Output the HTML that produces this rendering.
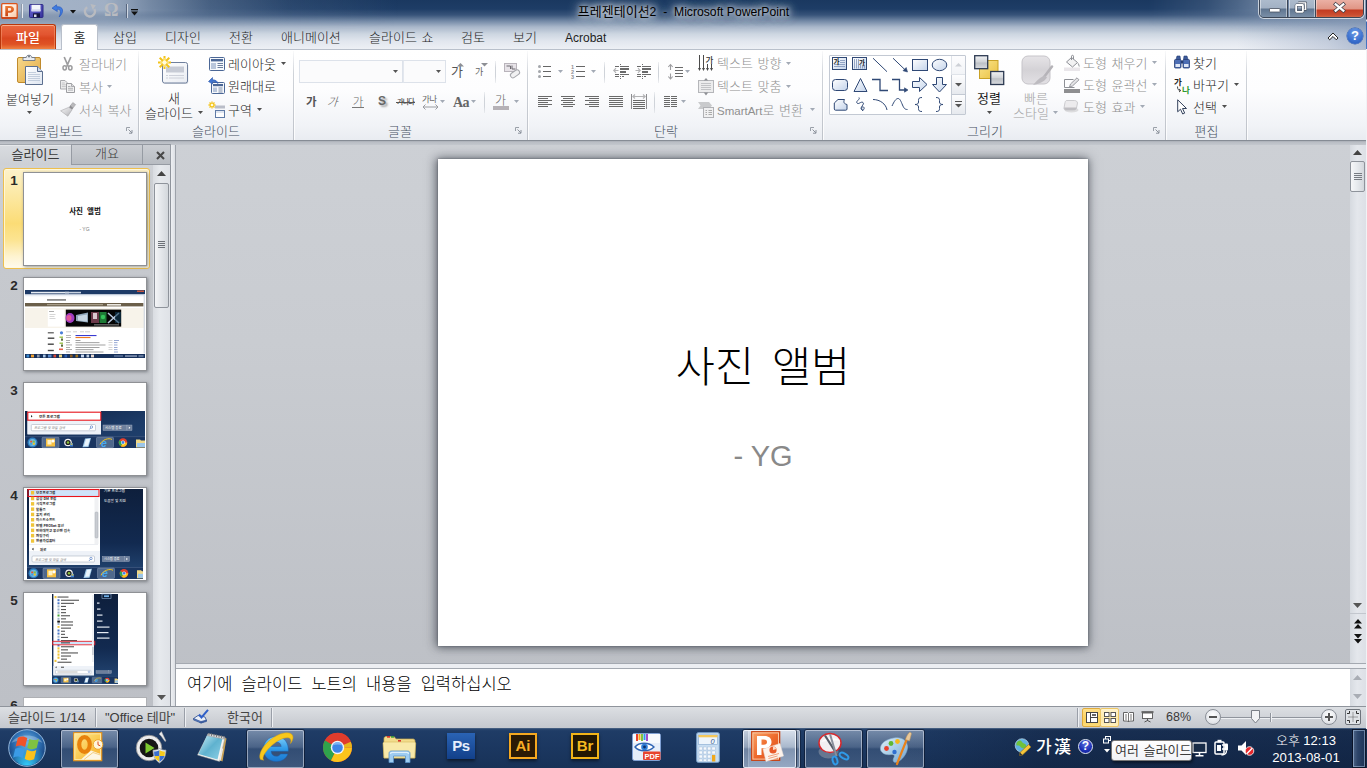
<!DOCTYPE html>
<html lang="ko">
<head>
<meta charset="utf-8">
<title>프레젠테이션2 - Microsoft PowerPoint</title>
<style>
*{box-sizing:border-box;margin:0;padding:0}
html,body{width:1367px;height:768px;overflow:hidden;background:#fff}
body{position:relative;font-family:"Liberation Sans","Noto Sans CJK KR",sans-serif;font-size:12px;color:#1e1e1e}
.abs{position:absolute}
.t{position:absolute;white-space:nowrap;line-height:16px;font-size:12px}
.k{font-size:13px;font-weight:300}
.g{color:#8f8f8f}
.t.k,.t .k{word-spacing:1px}
.dd{position:absolute;width:5px;height:3px;background:#4f4f4f;clip-path:polygon(0 0,100% 0,50% 100%)}
.dd.g{background:#a3aab5}
.ln{position:absolute;width:1px;background:linear-gradient(to bottom,rgba(205,209,216,.3),#cfd3d9 30%,#cfd3d9 70%,rgba(205,209,216,.3))}
.lch{position:absolute;width:7px;height:7px}
svg{position:absolute;overflow:visible}
/* ---------- title bar ---------- */
#titlebar{left:0;top:0;width:1367px;height:50px;
 background:linear-gradient(to left,rgba(125,145,178,.55) 0,rgba(125,145,178,.3) 40px,rgba(125,145,178,0) 130px),linear-gradient(to bottom,#1a3860 0px,#1e3d66 9px,#38547a 15px,#7389a6 21px,#a9b7ca 27px,#cdd6e1 34px,#e1e6ee 41px,#edf0f5 49px);}
#tbl{left:0;top:0;width:420px;height:34px;background:linear-gradient(to right,rgba(172,186,205,.95) 0,rgba(172,186,205,.92) 105px,rgba(172,186,205,.62) 150px,rgba(172,186,205,.3) 210px,rgba(172,186,205,.1) 290px,rgba(172,186,205,0) 400px);-webkit-mask-image:linear-gradient(to bottom,#000 0,#000 10px,rgba(0,0,0,.5) 20px,transparent 32px);mask-image:linear-gradient(to bottom,#000 0,#000 10px,rgba(0,0,0,.5) 20px,transparent 32px)}
#tbr{left:1147px;top:0;width:220px;height:34px;background:linear-gradient(to left,rgba(150,168,192,.75) 0,rgba(150,168,192,.6) 100px,rgba(150,168,192,.2) 160px,rgba(150,168,192,0) 220px);-webkit-mask-image:linear-gradient(to bottom,#000 0,#000 10px,rgba(0,0,0,.5) 20px,transparent 32px);mask-image:linear-gradient(to bottom,#000 0,#000 10px,rgba(0,0,0,.5) 20px,transparent 32px)}
#title{left:0;top:4px;width:1367px;text-align:center;font-size:12.2px;color:#000;
 text-shadow:0 0 5px rgba(255,255,255,.9),0 0 8px rgba(255,255,255,.8),0 0 12px rgba(235,240,248,.8),0 0 16px rgba(220,228,240,.7)}
#title .k{font-weight:400}
/* ---------- ribbon ---------- */
#ribbon{left:0;top:49px;width:1367px;height:92px;background:linear-gradient(to bottom,#ffffff 0,#fdfdfe 40px,#f1f3f7 75px,#e9ecf1 90px);border-top:1px solid #b9c0cb;border-bottom:1px solid #868c95}
.sep{position:absolute;top:51px;width:1px;height:89px;background:linear-gradient(to bottom,rgba(200,204,212,.1),#cfd3d9 25%,#c3c7ce 80%,#bfc3ca 100%);box-shadow:1px 0 0 rgba(255,255,255,.8)}
.grp{position:absolute;top:124px;font-size:13px;line-height:16px;color:#465061;text-align:center;white-space:nowrap}
/* ---------- work area ---------- */
#work{left:0;top:141px;width:1367px;height:565px;background:linear-gradient(to bottom,#cdd0d5 0,#c9ccd1 200px,#bcbfc5 565px)}
#slide{left:438px;top:159px;width:650px;height:487px;background:#fff;box-shadow:0 0 2px rgba(70,75,85,.7),0 0 10px 1px rgba(60,65,75,.55),-4px 0 9px rgba(60,65,75,.22),0 2px 6px rgba(60,65,75,.2)}
.num{font-size:13.500px;line-height:18px;font-weight:700;color:#2a2a2a;width:12px;text-align:center;font-family:"Liberation Sans",sans-serif}
.thumb{position:absolute;left:23px;width:124px;height:94px;background:#fff;border:1px solid rgba(105,108,114,.75);box-shadow:1px 1px 3px rgba(60,64,72,.5)}
/* ---------- status ---------- */
.ssep{position:absolute;top:708px;width:1px;height:19px;background:#9a9fa8;box-shadow:1px 0 0 #eef0f3}
.tb{position:absolute;top:730px;height:38px;border-radius:2px}
.tb.on{background:linear-gradient(to bottom,rgba(190,205,225,.55) 0,rgba(150,170,198,.38) 45%,rgba(95,120,155,.35) 50%,rgba(120,145,180,.4) 100%);box-shadow:inset 0 0 0 1px rgba(225,232,242,.55),0 0 0 1px rgba(10,20,40,.6)}
.tb.act{background:linear-gradient(to bottom,rgba(225,232,242,.85) 0,rgba(185,198,216,.75) 45%,rgba(140,158,185,.75) 50%,rgba(160,178,204,.8) 100%);box-shadow:inset 0 0 0 1px rgba(245,248,252,.8),0 0 0 1px rgba(10,20,40,.6)}

#status{left:0;top:706px;width:1367px;height:23px;background:linear-gradient(to bottom,#dcdfe3 0,#d0d3d8 50%,#c3c7cd 100%);border-top:1px solid #8f949c}
#taskbar{left:0;top:728px;width:1367px;height:40px;background:linear-gradient(to bottom,#5c728f 0,#2a466e 1px,#1f3c66 3px,#1b3760 20px,#183257 40px)}
</style>
</head>
<body>
<div id="titlebar" class="abs"></div>
<div id="tbl" class="abs"></div>
<div id="tbr" class="abs"></div>
<div id="title" class="t"><span class="k">프레젠테이션</span>2&nbsp; -&nbsp; Microsoft PowerPoint</div>
<div id="ribbon" class="abs"></div>
<div id="work" class="abs"></div>
<div id="status" class="abs"></div>
<div id="taskbar" class="abs"></div>
<!-- QAT -->
<svg style="left:1px;top:3px" width="17" height="16" viewBox="0 0 17 16">
 <defs><linearGradient id="pg" x1="0" y1="0" x2="1" y2="1"><stop offset="0" stop-color="#ffffff"/><stop offset=".6" stop-color="#fde3d0"/><stop offset="1" stop-color="#f9c3a0"/></linearGradient>
 <linearGradient id="pg2" x1="0" y1="0" x2="0" y2="1"><stop offset="0" stop-color="#ec7b35"/><stop offset="1" stop-color="#c8410f"/></linearGradient></defs>
 <rect x=".7" y=".7" width="15.500" height="14.600" rx="1" fill="url(#pg)" stroke="#d9541c" stroke-width="1.300"/>
 <path d="M.7 14.800h15.500" stroke="#c23a12" stroke-width="1.400"/>
 <path d="M4.300 3h4.700c2.500 0 4 1.300 4 3.300s-1.600 3.400-4.100 3.400H7V13.300H4.300z M7 5v2.800h1.500c1.100 0 1.700-.5 1.700-1.400S9.600 5 8.500 5z" fill="url(#pg2)"/>
</svg>
<div class="abs" style="left:21px;top:4px;width:1px;height:14px;background:#8d98a8"></div>
<div class="abs" style="left:22px;top:4px;width:1px;height:14px;background:#e6ebf2"></div>
<svg style="left:29px;top:4px" width="15" height="14" viewBox="0 0 15 14">
 <defs><linearGradient id="svg1" x1="0" y1="0" x2="1" y2="1"><stop offset="0" stop-color="#6a66d4"/><stop offset="1" stop-color="#35329a"/></linearGradient></defs>
 <rect x=".5" y=".5" width="13.500" height="13" rx=".8" fill="url(#svg1)" stroke="#2d2b86"/>
 <rect x="2.500" y=".8" width="9" height="6.500" fill="#f4f5fb"/><rect x="2.500" y="5.300" width="9" height="2" fill="#d5d7ee"/>
 <rect x="4" y="9.300" width="7" height="4.200" fill="#15153f"/>
 <rect x="5" y="10.500" width="2.500" height="2.500" fill="#dadbe8"/>
</svg>
<svg style="left:51px;top:4px" width="16" height="14" viewBox="0 0 16 14">
 <path d="M5.500 .8L1 4.200 6.300 7.500 6 5.300c3.300-.4 4.600 1.600 2.200 7.700C13.500 8 12.500 2 5.800 2.800z" fill="#3f7be0" stroke="#2a5cc0" stroke-width=".7" stroke-linejoin="round"/>
</svg>
<svg style="left:70px;top:10px" width="6" height="4" viewBox="0 0 6 4"><path d="M0 0h6l-3 3.5z" fill="#111"/></svg>
<svg style="left:83px;top:4px" width="14" height="14" viewBox="0 0 14 14">
 <path d="M4.200 3.200A5 5 0 1 0 11.300 5" fill="none" stroke="#b9bbc0" stroke-width="2.500"/>
 <path d="M7.500 0l5.300 1.300-3 4.500z" fill="#b9bbc0"/>
</svg>
<div class="t" style="left:104px;top:0px;font-size:18px;line-height:20px;color:#b9bbc0;font-weight:700;font-family:'Liberation Serif','DejaVu Serif',serif">Ω</div>
<div class="abs" style="left:126px;top:4px;width:1px;height:14px;background:#56657d"></div>
<div class="abs" style="left:127px;top:4px;width:1px;height:14px;background:#cfd7e2"></div>
<svg style="left:131px;top:9px" width="8" height="7" viewBox="0 0 8 7"><rect x="0" y="0" width="7" height="1.3" fill="#111"/><path d="M0 2.6h7l-3.5 3.8z" fill="#111"/></svg>

<!-- window buttons -->
<div class="abs" style="left:1259px;top:-2px;width:105px;height:20px;border:1px solid #3c4656;border-radius:0 0 5px 5px;box-shadow:0 0 0 1px rgba(255,255,255,.65);overflow:hidden">
 <div class="abs" style="left:0;top:0;width:28px;height:20px;background:linear-gradient(to bottom,#aebccd 0,#a2b1c4 9px,#5f7590 10px,#7e92aa 19px);border-right:1px solid #3c4656;box-shadow:inset 0 0 0 1px rgba(255,255,255,.45)"></div>
 <div class="abs" style="left:29px;top:0;width:27px;height:20px;background:linear-gradient(to bottom,#aebccd 0,#a2b1c4 9px,#5f7590 10px,#7e92aa 19px);border-right:1px solid #3c4656;box-shadow:inset 0 0 0 1px rgba(255,255,255,.45)"></div>
 <div class="abs" style="left:56px;top:0;width:48px;height:20px;background:linear-gradient(to bottom,#ecb3a8 0,#e09585 10px,#c23b22 11px,#cb4e31 16px,#dd7c58 20px);box-shadow:inset 0 0 0 1px rgba(255,255,255,.4)"></div>
</div>
<svg style="left:1269px;top:8px" width="12" height="5" viewBox="0 0 12 5"><rect x=".5" y=".5" width="10.5" height="3.5" rx=".6" fill="#fff" stroke="#4a5260" stroke-width=".8"/></svg>
<svg style="left:1295px;top:2px" width="12" height="11" viewBox="0 0 13 12">
 <path d="M3.5 .7h8.3v7.6H9.6" fill="none" stroke="#4a5260" stroke-width="2.6" stroke-linejoin="round"/>
 <path d="M3.5 .9h8.1v7.2H9.6" fill="none" stroke="#fff" stroke-width="1.5" stroke-linejoin="round"/>
 <rect x="1.2" y="3.3" width="7.4" height="7.4" rx=".6" fill="none" stroke="#4a5260" stroke-width="3.2"/>
 <rect x="1.2" y="3.3" width="7.4" height="7.4" rx=".6" fill="none" stroke="#fff" stroke-width="2"/>
</svg>
<svg style="left:1334px;top:3px" width="11" height="9" viewBox="0 0 12 10">
 <path d="M1.800 1.500L10.200 8.500M10.200 1.500L1.800 8.500" stroke="#3f3f48" stroke-width="4.200" stroke-linecap="square"/>
 <path d="M1.800 1.500L10.200 8.500M10.200 1.500L1.800 8.500" stroke="#fff" stroke-width="2.600" stroke-linecap="square"/>
</svg>
<!-- help -->
<svg style="left:1327px;top:32px" width="12" height="9" viewBox="0 0 12 9"><path d="M6 1L11 6 9.300 7.800 6 4.500 2.700 7.800 1 6z" fill="#fff" stroke="#222" stroke-width="1" stroke-linejoin="miter"/></svg>
<div class="abs" style="left:1347px;top:28px;width:16px;height:16px;border-radius:8px;background:radial-gradient(circle at 50% 30%,#6f9ee6 0,#3a6fce 60%,#2556b4 100%);box-shadow:0 0 0 .5px #2a58ae"></div>
<div class="t" style="left:1347px;top:28px;width:16px;text-align:center;color:#fff;font-weight:bold;font-size:13px;line-height:16px">?</div>
<div class="abs" style="left:1366px;top:0;width:1px;height:49px;background:linear-gradient(to bottom,#1d2f4d 0,#1d2f4d 19px,#e8ecf2 20px,#e8ecf2 21px,#3a66b0 22px,#4a78c4 48px);z-index:5"></div>
<div class="abs" style="left:1366px;top:49px;width:1px;height:680px;background:#f1f2f5;z-index:5"></div>

<!-- tabs -->
<div class="abs" style="left:0;top:24px;width:56px;height:25px;border-radius:3px 3px 0 0;border:1px solid #b8370c;border-bottom:none;background:linear-gradient(to bottom,#ea6840 0,#e25530 40%,#d9461f 55%,#df5224 80%,#ef8040 100%);box-shadow:inset 0 1px 0 rgba(255,200,170,.7),inset 1px 0 0 rgba(255,180,140,.4),inset -1px 0 0 rgba(255,180,140,.4)"></div>
<div class="t" style="left:0;top:30px;width:56px;text-align:center;color:#fff;font-size:13px;font-weight:500">파일</div>
<div class="abs" style="left:61px;top:24px;width:37px;height:26px;border-radius:3px 3px 0 0;border:1px solid #b9c0cb;border-bottom:none;background:#fff"></div>
<div class="t" style="left:61px;top:30px;width:37px;text-align:center;z-index:3;font-size:13px">홈</div>
<div class="t k tab" style="left:113px;top:30px">삽입</div>
<div class="t k tab" style="left:165px;top:30px">디자인</div>
<div class="t k tab" style="left:229px;top:30px">전환</div>
<div class="t k tab" style="left:281px;top:30px">애니메이션</div>
<div class="t k tab" style="left:369px;top:30px">슬라이드 쇼</div>
<div class="t k tab" style="left:461px;top:30px">검토</div>
<div class="t k tab" style="left:513px;top:30px">보기</div>
<div class="t tab" style="left:565px;top:30px">Acrobat</div>
<!-- ===== RIBBON ===== -->
<svg width="0" height="0" style="left:0;top:0"><defs>
 <linearGradient id="gPaper" x1="0" y1="0" x2="1" y2="1"><stop offset="0" stop-color="#ffffff"/><stop offset="1" stop-color="#dfe6f1"/></linearGradient>
 <linearGradient id="gClip" x1="0" y1="0" x2="1" y2="1"><stop offset="0" stop-color="#f7d98c"/><stop offset="1" stop-color="#e2a943"/></linearGradient>
 <linearGradient id="gShape" x1="0" y1="0" x2="1" y2="1"><stop offset="0" stop-color="#ffffff"/><stop offset="1" stop-color="#c3d3ea"/></linearGradient>
 <linearGradient id="gGray" x1="0" y1="0" x2="1" y2="1"><stop offset="0" stop-color="#f1f1f2"/><stop offset="1" stop-color="#a9abaf"/></linearGradient>
 <linearGradient id="gYel" x1="0" y1="0" x2="1" y2="1"><stop offset="0" stop-color="#fbe58e"/><stop offset="1" stop-color="#e9c040"/></linearGradient>
 <symbol id="lch" viewBox="0 0 7 7"><path d="M.5 4V.5H4" fill="none" stroke="#9aa0a9" stroke-width="1"/><path d="M2.5 2.5L6 6M6 3v3.2H3" fill="none" stroke="#8b919b" stroke-width="1"/></symbol>
</defs></svg>

<!-- clipboard group -->
<svg style="left:16px;top:54px" width="29" height="32" viewBox="0 0 29 32">
 <rect x="1.5" y="3.5" width="23" height="25" rx="1.5" fill="url(#gClip)" stroke="#c08a2c"/>
 <path d="M7 3.5h3.2c0-3 5.6-3 5.6 0H19v3H7z" fill="#e9ecf1" stroke="#6d7684" stroke-width=".9"/>
 <circle cx="13" cy="2.6" r="1" fill="#6d7684"/>
 <path d="M9.5 12.5h12l5 5v13h-17z" fill="url(#gPaper)" stroke="#5c6f8f" stroke-width="1"/>
 <path d="M21.5 12.5v5h5" fill="#cfd9e8" stroke="#5c6f8f" stroke-width="1"/>
 <path d="M12 18.5h8M12 20.5h12M12 22.5h12M12 24.5h12M12 26.5h12" stroke="#b8c4d6" stroke-width=".8"/>
</svg>
<div class="t k" style="left:6px;top:92px">붙여넣기</div>
<div class="dd" style="left:27px;top:111px"></div>

<svg style="left:62px;top:57px" width="11" height="14" viewBox="0 0 11 14">
 <path d="M2.200 0L6.300 9.500M8.800 0L4.700 9.500" stroke="#9c9c9e" stroke-width="1.700" fill="none"/>
 <ellipse cx="2.700" cy="10.800" rx="1.700" ry="2.100" fill="none" stroke="#9c9c9e" stroke-width="1.500"/>
 <ellipse cx="8.300" cy="10.800" rx="1.700" ry="2.100" fill="none" stroke="#9c9c9e" stroke-width="1.500"/>
</svg>
<div class="t k g" style="left:79px;top:57px">잘라내기</div>
<svg style="left:60px;top:80px" width="16" height="13" viewBox="0 0 16 13">
 <path d="M.5 .5h4.500l2 2v6.500H.5z" fill="#ededee" stroke="#a9aaae"/>
 <path d="M1.800 3h3M1.800 4.800h4M1.800 6.600h4" stroke="#b9babd" stroke-width=".8"/>
 <path d="M6.500 3.500h5l3 3v6H6.500z" fill="#f1f1f2" stroke="#9c9da1"/>
 <path d="M11.500 3.500v3h3" fill="#dcdcde" stroke="#9c9da1" stroke-width=".8"/>
 <path d="M8 6.500h2.500M8 8.300h5M8 10.100h5" stroke="#a9aaae" stroke-width=".9"/>
</svg>
<div class="t k g" style="left:79px;top:80px">복사</div>
<div class="dd g" style="left:107px;top:85px"></div>
<svg style="left:60px;top:102px" width="17" height="15" viewBox="0 0 17 15">
 <defs><linearGradient id="fpg" x1="0" y1="0" x2="1" y2="1"><stop offset="0" stop-color="#f4f4f5"/><stop offset=".6" stop-color="#cfcfd2"/><stop offset="1" stop-color="#a5a5a9"/></linearGradient></defs>
 <path d="M12.800 .6l2.800 2-2.700 3.500-2.800-2z" fill="#b9b9bc" stroke="#9a9a9e" stroke-width=".6"/>
 <path d="M10.300 3.600l3 2.300-1.300 1.800-3.100-2.200z" fill="#8e8e92"/>
 <path d="M8.800 5.300l3.300 2.400-4.300 6.500L.6 8.800z" fill="url(#fpg)" stroke="#a9a9ad" stroke-width=".6"/>
</svg>
<div class="t k g" style="left:79px;top:103px">서식 복사</div>
<div class="grp k" style="left:0;width:118px">클립보드</div>
<svg style="left:126px;top:127px" width="7" height="7"><use href="#lch"/></svg>
<div class="sep" style="left:138px"></div>

<!-- slides group -->
<svg style="left:158px;top:56px" width="32" height="30" viewBox="0 0 32 30">
 <defs><linearGradient id="nsg" x1="0" y1="0" x2="1" y2="1"><stop offset="0" stop-color="#ffffff"/><stop offset="1" stop-color="#e9ecf2"/></linearGradient></defs>
 <rect x="4.500" y="6.500" width="25" height="20.500" rx="2" fill="#9aa3b3" opacity=".35" transform="translate(.8 1)"/>
 <rect x="4.500" y="6.500" width="25" height="20.500" rx="2" fill="url(#nsg)" stroke="#6f7f9c"/>
 <rect x="8" y="10.500" width="18" height="6" fill="#c7cbd5"/>
 <path d="M8 19.500h2M11 19.500h15M8 22h2M11 22h15" stroke="#c9cdd6" stroke-width=".9"/>
 <path d="M6.500 0v13M0 6.500h13M1.700 1.700l9.600 9.600M11.300 1.700l-9.600 9.600" stroke="#f3c318" stroke-width="2"/>
 <path d="M6.500 2v9M2 6.500h9" stroke="#fbe26a" stroke-width="1.200"/>
 <circle cx="6.500" cy="6.500" r="2.200" fill="#fffbe0"/>
</svg>
<div class="t k" style="left:145px;top:91px;width:58px;text-align:center">새</div>
<div class="t k" style="left:145px;top:106px">슬라이드</div>
<div class="dd" style="left:198px;top:111px"></div>

<svg style="left:209px;top:57px" width="16" height="14" viewBox="0 0 16 14">
 <rect x=".5" y=".5" width="15" height="13" rx="1" fill="#f7f9fc" stroke="#4b6796"/>
 <rect x="2" y="2" width="12" height="2.4" fill="#4b6796"/>
 <rect x="2" y="6" width="5" height="6" fill="#b9c6db"/>
 <path d="M8.5 6.5h5.5M8.5 8.5h5.5M8.5 10.5h5.5" stroke="#6d7f9e" stroke-width="1"/>
</svg>
<div class="t k" style="left:228px;top:57px">레이아웃</div>
<div class="dd" style="left:281px;top:62px"></div>
<svg style="left:208px;top:77px" width="17" height="17" viewBox="0 0 17 17">
 <rect x="3.5" y="5.5" width="13" height="11" rx="1" fill="#f7f9fc" stroke="#4b6796"/>
 <rect x="5" y="7" width="10" height="2.2" fill="#4b6796"/>
 <rect x="5" y="10.5" width="4" height="4.5" fill="#b9c6db"/>
 <path d="M10.5 11h4M10.5 13h4M10.5 15h4" stroke="#6d7f9e" stroke-width=".9"/>
 <path d="M.5 4.5L4.5 .5v2.3c3.2 0 5 1.400 5.500 3.700-1.500-1.300-3-1.800-5.500-1.800v2.300z" fill="#3f74d1" stroke="#2a56a8" stroke-width=".6"/>
</svg>
<div class="t k" style="left:228px;top:79px">원래대로</div>
<svg style="left:208px;top:101px" width="18" height="17" viewBox="0 0 18 17">
 <rect x="7" y="4.500" width="10" height="3" fill="#b9bdc8"/>
 <rect x="7.500" y="9.500" width="9" height="7" fill="#fdfdfe" stroke="#5f7aa6"/>
 <rect x="8" y="10" width="8" height="2" fill="#dfe5f0"/>
 <path d="M4 .5v7M.5 4h7M1.500 1.500l5 5M6.500 1.500l-5 5" stroke="#f3c318" stroke-width="1.300"/>
 <circle cx="4" cy="4" r="1.300" fill="#fffbe0"/>
</svg>
<div class="t k" style="left:228px;top:103px">구역</div>
<div class="dd" style="left:257px;top:108px"></div>
<div class="grp k" style="left:138px;width:156px">슬라이드</div>
<div class="sep" style="left:293px"></div>

<!-- font group -->
<div class="abs" style="left:299px;top:60px;width:104px;height:23px;border:1px solid #dde2ea;background:#fbfbfc"></div>
<div class="abs" style="left:403px;top:60px;width:43px;height:23px;border:1px solid #dde2ea;border-left:1px solid #e3e7ee;background:#fbfbfc"></div>
<div class="dd" style="left:393px;top:70px;background:#555"></div>
<div class="dd" style="left:436px;top:70px;background:#555"></div>
<div class="t" style="left:451px;top:63px;font-size:13px;line-height:18px;color:#555;font-weight:400">가</div>
<svg style="left:457px;top:63px" width="7" height="4" viewBox="0 0 7 4"><path d="M0 3.500L3.500 0 7 3.500z" fill="#8d8f94"/></svg>
<div class="t" style="left:475px;top:65px;font-size:9px;line-height:14px;color:#666;font-weight:400">가</div>
<svg style="left:481px;top:63px" width="7" height="4" viewBox="0 0 7 4"><path d="M0 0h7L3.500 3.500z" fill="#8d8f94"/></svg>
<div class="ln" style="left:495px;top:61px;height:22px"></div>
<svg style="left:504px;top:63px" width="17" height="16" viewBox="0 0 17 16">
 <rect x=".5" y=".5" width="12" height="8" fill="#e7e3e8" stroke="#b9b4bb"/>
 <path d="M2.500 3h4v3M8 2.500v3.500h3.500" fill="none" stroke="#6d6a70" stroke-width="1"/>
 <rect x="6" y="8.300" width="10" height="5" rx="2.400" transform="rotate(-35 11 10.800)" fill="#f1f1f2" stroke="#a5a6ab"/>
</svg>
<div class="t" style="left:306px;top:95px;font-size:11.500px;line-height:14px;color:#555;font-weight:700">가</div>
<div class="t" style="left:328px;top:95px;font-size:11.500px;line-height:14px;color:#5a5a5a;font-weight:300;transform:skewX(-18deg)">가</div>
<div class="t" style="left:352px;top:95px;font-size:11.500px;line-height:14px;color:#6a6a6a;font-weight:300;border-bottom:1px solid #777;height:13px;width:12px;text-align:center">가</div>
<div class="t" style="left:378px;top:92px;font-size:12px;line-height:18px;color:#666;font-weight:700;text-shadow:2px 2px 2px rgba(0,0,0,.35)">S</div>
<div class="t" style="left:397px;top:95px;font-size:7px;line-height:14px;color:#444;letter-spacing:-.8px;font-weight:500">가나다</div>
<div class="abs" style="left:396px;top:102px;width:19px;height:1px;background:#555"></div>
<div class="t" style="left:422px;top:92px;font-size:8.500px;line-height:14px;color:#666;letter-spacing:-.5px;font-weight:400">가나</div>
<svg style="left:422px;top:104px" width="17" height="6" viewBox="0 0 17 6"><path d="M1 3h15M3.500 .5L1 3l2.500 2.500M13.500 .5L16 3l-2.500 2.500" fill="none" stroke="#9a9ca1" stroke-width="1"/></svg>
<div class="dd g" style="left:440px;top:100px"></div>
<div class="t" style="left:453px;top:94px;font-size:14px;line-height:18px;color:#666;font-weight:700;font-family:'Liberation Serif',serif;letter-spacing:-.5px">Aa</div>
<div class="dd g" style="left:471px;top:100px"></div>
<div class="ln" style="left:484px;top:92px;height:21px"></div>
<div class="t" style="left:495px;top:92px;font-size:12px;line-height:18px;color:#666;font-weight:300">가</div>
<div class="abs" style="left:493px;top:106px;width:16px;height:4px;background:#b5b1b6"></div>
<div class="dd g" style="left:514px;top:100px"></div>
<div class="grp k" style="left:294px;width:212px">글꼴</div>
<svg style="left:515px;top:127px" width="7" height="7"><use href="#lch"/></svg>
<div class="sep" style="left:527px"></div>

<!-- paragraph group -->
<svg style="left:538px;top:65px" width="14" height="13" viewBox="0 0 14 13"><g fill="#a3a6ab"><circle cx="1.500" cy="1.500" r="1.500"/><circle cx="1.500" cy="6.500" r="1.500"/><circle cx="1.500" cy="11.500" r="1.500"/></g><g fill="#666" shape-rendering="crispEdges"><rect x="5" y="1" width="8" height="1"/><rect x="5" y="6" width="8" height="1"/><rect x="5" y="11" width="8" height="1"/></g></svg>
<div class="dd g" style="left:558px;top:70px"></div>
<svg style="left:571px;top:64px" width="15" height="15" viewBox="0 0 15 15"><g fill="#666" shape-rendering="crispEdges"><rect x="5" y="2" width="9" height="1"/><rect x="5" y="7" width="9" height="1"/><rect x="5" y="12" width="9" height="1"/></g><g font-size="5.500" font-family="Liberation Sans,sans-serif" font-weight="bold" fill="#8e9095"><text x="0" y="4.500">1</text><text x="0" y="9.500">2</text><text x="0" y="14.500">3</text></g></svg>
<div class="dd g" style="left:591px;top:70px"></div>
<div class="ln" style="left:604px;top:62px;height:21px"></div>
<svg style="left:613px;top:64px" width="17" height="15" viewBox="0 0 17 15"><g fill="#6a6a6a" shape-rendering="crispEdges"><rect x="7" y="0" width="1" height="1"/><rect x="7" y="14" width="1" height="1"/><rect x="7" y="12" width="1" height="1"/><rect x="2" y="2" width="4" height="1"/><rect x="7" y="2" width="9" height="1"/><rect x="7" y="4" width="9" height="2"/><rect x="7" y="7" width="6" height="2"/><rect x="2" y="10" width="4" height="1"/><rect x="7" y="10" width="9" height="1"/><rect x="2" y="12" width="4" height="1"/><rect x="9" y="12" width="2" height="1"/></g><path d="M5.500 6.500H.8M3 4.200L.8 6.500 3 8.800" fill="none" stroke="#b3b3b5" stroke-width="1.200"/></svg>
<svg style="left:635px;top:64px" width="17" height="15" viewBox="0 0 17 15"><g fill="#6a6a6a" shape-rendering="crispEdges"><rect x="7" y="0" width="1" height="1"/><rect x="7" y="14" width="1" height="1"/><rect x="7" y="12" width="1" height="1"/><rect x="2" y="2" width="4" height="1"/><rect x="7" y="2" width="9" height="1"/><rect x="7" y="4" width="9" height="2"/><rect x="7" y="7" width="6" height="2"/><rect x="2" y="10" width="4" height="1"/><rect x="7" y="10" width="9" height="1"/><rect x="2" y="12" width="4" height="1"/><rect x="9" y="12" width="2" height="1"/></g><path d="M.5 6.500h4.700M3 4.200l2.200 2.300L3 8.800" fill="none" stroke="#b3b3b5" stroke-width="1.200"/></svg>
<div class="ln" style="left:658px;top:62px;height:21px"></div>
<svg style="left:667px;top:63px" width="17" height="17" viewBox="0 0 17 17"><g fill="#6a6a6a" shape-rendering="crispEdges"><rect x="8" y="4" width="8" height="1"/><rect x="8" y="7" width="8" height="1"/><rect x="8" y="10" width="8" height="1"/><rect x="8" y="13" width="8" height="1"/></g><path d="M3.500 1.500v5.500M1.300 4L3.500 1.500 5.700 4M3.500 10.500v5.500M1.300 13.500L3.500 16l2.200-2.500" fill="none" stroke="#9d9da0" stroke-width="1.100"/></svg>
<div class="dd g" style="left:685px;top:70px"></div>
<svg style="left:538px;top:96px" width="14" height="11" viewBox="0 0 14 11"><g fill="#6a6a6a" shape-rendering="crispEdges"><rect x="0" y="0" width="14" height="1"/><rect x="0" y="2" width="10" height="1"/><rect x="0" y="4" width="14" height="1"/><rect x="0" y="6" width="10" height="1"/><rect x="0" y="8" width="14" height="1"/><rect x="0" y="10" width="10" height="1"/></g></svg>
<svg style="left:561px;top:96px" width="14" height="11" viewBox="0 0 14 11"><g fill="#6a6a6a" shape-rendering="crispEdges"><rect x="0" y="0" width="14" height="1"/><rect x="2" y="2" width="10" height="1"/><rect x="0" y="4" width="14" height="1"/><rect x="2" y="6" width="10" height="1"/><rect x="0" y="8" width="14" height="1"/><rect x="2" y="10" width="10" height="1"/></g></svg>
<svg style="left:585px;top:96px" width="14" height="11" viewBox="0 0 14 11"><g fill="#6a6a6a" shape-rendering="crispEdges"><rect x="0" y="0" width="14" height="1"/><rect x="4" y="2" width="10" height="1"/><rect x="0" y="4" width="14" height="1"/><rect x="4" y="6" width="10" height="1"/><rect x="0" y="8" width="14" height="1"/><rect x="4" y="10" width="10" height="1"/></g></svg>
<svg style="left:609px;top:96px" width="14" height="11" viewBox="0 0 14 11"><g fill="#6a6a6a" shape-rendering="crispEdges"><rect x="0" y="0" width="14" height="1"/><rect x="0" y="2" width="14" height="1"/><rect x="0" y="4" width="14" height="1"/><rect x="0" y="6" width="14" height="1"/><rect x="0" y="8" width="14" height="1"/><rect x="0" y="10" width="14" height="1"/></g></svg>
<svg style="left:631px;top:94px" width="16" height="15" viewBox="0 0 16 15"><g fill="#8d8d90" shape-rendering="crispEdges"><rect x="0" y="0" width="1" height="15"/><rect x="15" y="0" width="1" height="15"/></g><g fill="#6a6a6a" shape-rendering="crispEdges"><rect x="2" y="6" width="12" height="1"/><rect x="2" y="8" width="12" height="1"/><rect x="2" y="10" width="12" height="1"/><rect x="2" y="12" width="12" height="1"/><rect x="2" y="14" width="12" height="1"/></g><path d="M1.500 2.500h13M4 .5L1.800 2.500 4 4.500M12 .5l2.200 2L12 4.500" fill="none" stroke="#b3b3b5" stroke-width="1.100"/></svg>
<div class="ln" style="left:654px;top:92px;height:21px"></div>
<svg style="left:664px;top:96px" width="13" height="11" viewBox="0 0 13 11"><g fill="#6a6a6a" shape-rendering="crispEdges"><rect x="0" y="0" width="6" height="1"/><rect x="0" y="2" width="6" height="1"/><rect x="0" y="4" width="6" height="1"/><rect x="0" y="6" width="6" height="1"/><rect x="0" y="8" width="6" height="1"/><rect x="0" y="10" width="6" height="1"/><rect x="7" y="0" width="6" height="1"/><rect x="7" y="2" width="6" height="1"/><rect x="7" y="4" width="6" height="1"/><rect x="7" y="6" width="6" height="1"/><rect x="7" y="8" width="6" height="1"/><rect x="7" y="10" width="6" height="1"/></g></svg>
<div class="dd g" style="left:681px;top:100px"></div>

<svg style="left:698px;top:55px" width="16" height="17" viewBox="0 0 16 17">
 <g fill="#4a4a4a" shape-rendering="crispEdges"><rect x="1" y="0" width="1" height="14"/><rect x="5" y="0" width="1" height="14"/><rect x="9" y="9" width="1" height="5"/><rect x="13" y="9" width="1" height="5"/></g>
 <path d="M0 13h3l-1.500 3zM4 13h3l-1.500 3zM8 13h3l-1.500 3zM12 13h3l-1.500 3z" fill="#4a4a4a"/>
 <text x="7.500" y="7.500" font-size="8.500" font-weight="500" font-family="Noto Sans CJK KR,sans-serif" fill="#333">가</text>
</svg>
<div class="t k g" style="left:717px;top:56px">텍스트 방향</div>
<div class="dd g" style="left:786px;top:62px"></div>
<svg style="left:698px;top:78px" width="17" height="18" viewBox="0 0 17 18">
 <rect x=".5" y="2.500" width="15" height="12" fill="#ececed" stroke="#b5b6ba"/>
 <path d="M3 5.500h10M3 7.500h10M3 9.500h10M3 11.500h10" stroke="#bdbec2" stroke-width=".9"/>
 <path d="M8 0l2.200 2.500H5.800zM8 17.500l2.200-3H5.800z" fill="#8e9095"/>
</svg>
<div class="t k g" style="left:717px;top:79px">텍스트 맞춤</div>
<div class="dd g" style="left:786px;top:85px"></div>
<svg style="left:698px;top:101px" width="17" height="17" viewBox="0 0 17 17">
 <path d="M0 1h11l3 3.500-3 3.500H0l2.500-3.500z" fill="#c9cacc"/>
 <rect x="5.500" y="6.500" width="10" height="10" fill="#f0f0f1" stroke="#b0b1b5"/>
 <path d="M7.500 9.500h1.500M10.500 9.500h3.500M7.500 11.500h1.500M10.500 11.500h3.500M7.500 13.500h1.500M10.500 13.500h3.500" stroke="#aaa" stroke-width="1"/>
</svg>
<div class="t g" style="left:717px;top:103px"><span style="font-size:11.500px">SmartArt</span><span class="k">로 변환</span></div>
<div class="dd g" style="left:810px;top:108px"></div>
<div class="grp k" style="left:528px;width:276px">단락</div>
<svg style="left:810px;top:127px" width="7" height="7"><use href="#lch"/></svg>
<div class="sep" style="left:822px"></div>

<!-- drawing group -->
<div class="abs" style="left:829px;top:55px;width:137px;height:60px;border:1px solid #c3c9d3;background:#fff;border-radius:1px"></div>
<div class="abs" style="left:951px;top:56px;width:14px;height:19px;background:linear-gradient(#fdfdfe,#f2f4f7);border-left:1px solid #dfe3e9;border-bottom:1px solid #dfe3e9"></div>
<div class="abs" style="left:951px;top:75px;width:14px;height:20px;background:linear-gradient(#fdfdfe,#e6e9ee);border-left:1px solid #c3c9d3;border-bottom:1px solid #c3c9d3"></div>
<div class="abs" style="left:951px;top:95px;width:14px;height:19px;background:linear-gradient(#fdfdfe,#e6e9ee);border-left:1px solid #c3c9d3"></div>
<svg style="left:955px;top:63px" width="7" height="4" viewBox="0 0 7 4"><path d="M0 3.500L3.500 0 7 3.500z" fill="#cdd0d6"/></svg>
<svg style="left:955px;top:83px" width="7" height="4" viewBox="0 0 7 4"><path d="M0 0h7L3.500 3.500z" fill="#555"/></svg>
<svg style="left:955px;top:101px" width="7" height="7" viewBox="0 0 7 7"><path d="M0 .5h7" stroke="#555" stroke-width="1"/><path d="M0 3h7L3.500 6.500z" fill="#555"/></svg>
<svg style="left:829px;top:55px" width="122" height="60" viewBox="829 55 122 60" fill="none" stroke="#2f4875" stroke-width="1">
 <!-- row1 -->
 <rect x="832.500" y="57.500" width="14" height="12" fill="url(#gShape)"/>
 <path d="M840 60.500h5M840 62.500h5M834 64.500h11M834 66.500h11" stroke="#7f93b8" stroke-width=".8"/>
 <text x="833.500" y="63.500" font-size="6.500" font-weight="bold" font-family="Noto Sans CJK KR,sans-serif" fill="#1a1a1a" stroke="none">가</text>
 <rect x="852.500" y="57.500" width="14" height="12" fill="url(#gShape)"/>
 <path d="M854.500 59v9.500M856.500 59v9.500M858.500 59v9.500M860.500 65v3.500M862.500 65v3.500M864.500 65v3.500" stroke="#7f93b8" stroke-width=".8"/>
 <text x="859" y="64.500" font-size="6.500" font-weight="bold" font-family="Noto Sans CJK KR,sans-serif" fill="#1a1a1a" stroke="none">가</text>
 <path d="M873 58.200L887 71.700"/>
 <path d="M893 58.200L906 70.700"/><path d="M907.500 72l-4.500-1.300 3.200-3.200z" fill="#2f4875" stroke-width=".6"/>
 <rect x="912.500" y="59.500" width="15" height="11" fill="url(#gShape)"/>
 <ellipse cx="939.500" cy="65" rx="7.300" ry="5.700" fill="url(#gShape)"/>
 <!-- row2 -->
 <rect x="832.500" y="79.500" width="15" height="11" rx="3" fill="url(#gShape)"/>
 <path d="M860.500 78.500L867 91.500H854z" fill="url(#gShape)"/>
 <path d="M872 79.500h8v11h8" stroke-width="1.300"/>
 <path d="M892 79.500h7.500v10.500h6" stroke-width="1.300"/><path d="M908 90l-3.500-2.200v4.400z" fill="#2f4875" stroke-width=".6"/>
 <path d="M912.500 81.500h7v-4l7.500 7-7.500 7v-4h-7z" fill="url(#gShape)"/>
 <path d="M936.500 77.500h6v7h4l-7 7.500-7-7.500h4z" fill="url(#gShape)"/>
 <!-- row3 -->
 <path d="M838 99.500h6.500c-1.500 3 0 4.500 2.500 5v4.500c0 .8-.5 1.200-1.200 1.200H835.500c-.7 0-1.200-.5-1.200-1.200V103z" fill="url(#gShape)"/>
 <path d="M859 97.500c1.500 2-3.500 3.500-2 5.500s4-2 6-.500-3.500 5-1.500 7 3.500-1.500 2-2.500-3 1.500-.5 4"/>
 <path d="M873 99.500c7 0 13 4.500 14 10.500"/>
 <path d="M892 106c2-4.500 4-7.500 6-7.500s3 3 4.500 6.500 2.500 4.500 5 4.500"/>
 <path d="M922 97.500c-3 0-3.500 1-3.500 3v1.500c0 1.500-1 2.500-3.500 2.500 2.500 0 3.500 1 3.500 2.500v1.500c0 2 .5 3 3.500 3"/>
 <path d="M936 97.500c3 0 3.500 1 3.500 3v1.500c0 1.500 1 2.500 3.500 2.500-2.500 0-3.500 1-3.500 2.500v1.500c0 2-.5 3-3.500 3"/>
</svg>

<svg style="left:974px;top:55px" width="31" height="31" viewBox="0 0 31 31">
 <defs><linearGradient id="gSq" x1="0" y1="0" x2="0" y2="1"><stop offset="0" stop-color="#f2f3f5"/><stop offset=".5" stop-color="#cfd2d6"/><stop offset=".55" stop-color="#bcc0c5"/><stop offset="1" stop-color="#d9dbdf"/></linearGradient></defs>
 <rect x="5.500" y="5.500" width="18.500" height="18" fill="url(#gYel)" stroke="#c9a227"/>
 <rect x=".7" y=".7" width="13" height="13" fill="url(#gSq)" stroke="#2d3a52" stroke-width="1.300"/>
 <rect x="16.700" y="16.500" width="13" height="13" fill="url(#gSq)" stroke="#2d3a52" stroke-width="1.300"/>
</svg>
<div class="t k" style="left:959px;top:91px;width:60px;text-align:center;font-weight:400">정렬</div>
<div class="dd" style="left:987px;top:111px"></div>
<svg style="left:1021px;top:55px" width="33" height="32" viewBox="0 0 33 32">
 <defs><linearGradient id="gQs" x1="0" y1="0" x2="0" y2="1"><stop offset="0" stop-color="#e6e4e7"/><stop offset=".5" stop-color="#d4d2d6"/><stop offset="1" stop-color="#e2e0e4"/></linearGradient></defs>
 <rect x="1" y="1" width="28" height="28" rx="6" fill="url(#gQs)" stroke="#c6c4c9" stroke-width="1"/>
 <path d="M31 11.500L23 22" stroke="#b5b3b8" stroke-width="2.600" stroke-linecap="round"/>
 <path d="M24 20.500c-4 1-7 4-12 9.500 6-1 11-3 14-7.500z" fill="#bdbbc0"/>
</svg>
<div class="t k" style="left:1006px;top:91px;width:60px;text-align:center;color:#a3a3a3">빠른</div>
<div class="t k" style="left:1013px;top:106px;color:#a3a3a3">스타일</div>
<div class="dd g" style="left:1053px;top:111px"></div>

<svg style="left:1064px;top:55px" width="17" height="16" viewBox="0 0 17 16">
 <rect x="0" y="12.500" width="16" height="3.500" fill="#e9e6ea"/>
 <path d="M7.500 2.500l6 5-5 4.500-6-5z" fill="#f2f2f3" stroke="#8e9096" stroke-width="1"/>
 <path d="M7.500 5V1.200c0-1.200 2-1.200 2 0v3" fill="none" stroke="#8e9096" stroke-width="1"/>
 <path d="M13.500 7.500c1.500 1 2.500 2.500 2 4.500-1-.5-1.500-2-2-4.500z" fill="#a7a9ae"/>
</svg>
<div class="t k g" style="left:1083px;top:56px">도형 채우기</div>
<div class="dd g" style="left:1152px;top:61px"></div>
<svg style="left:1064px;top:77px" width="17" height="16" viewBox="0 0 17 16">
 <rect x="0" y="12" width="16" height="4" fill="#8e8e90"/>
 <path d="M.5 10.500V2.500h9" fill="none" stroke="#8e9096" stroke-width="1"/><path d="M.5 10.500h10" stroke="#8e9096" stroke-width="1"/>
 <path d="M5.500 10l1-3L13 .8l2 2L8.500 9z" fill="#e4e4e6" stroke="#8e9096" stroke-width=".9"/>
</svg>
<div class="t k g" style="left:1083px;top:78px">도형 윤곽선</div>
<div class="dd g" style="left:1152px;top:83px"></div>
<svg style="left:1063px;top:99px" width="17" height="14" viewBox="0 0 17 14">
 <ellipse cx="8.500" cy="11" rx="7" ry="2.500" fill="#dcdcde"/>
 <path d="M3.500 1.500h8c1.500 0 3 1 3 2.500l-1 5c0 1-1.500 2-3 2H3c-1.500 0-2.200-1-2-2l1-5.500c.2-1 .8-2 1.500-2z" fill="#ecebed" stroke="#c2c1c5" stroke-width=".8"/>
 <path d="M1.200 8.500h12.500l-.3 1c0 1-1.500 1.500-3 1.500H3c-1.500 0-2-1-1.800-2.500z" fill="#bfbec2"/>
</svg>
<div class="t k g" style="left:1083px;top:100px">도형 효과</div>
<div class="dd g" style="left:1140px;top:105px"></div>
<div class="grp k" style="left:823px;width:324px">그리기</div>
<svg style="left:1153px;top:127px" width="7" height="7"><use href="#lch"/></svg>
<div class="sep" style="left:1165px"></div>

<!-- editing group -->
<svg style="left:1174px;top:55px" width="16" height="14" viewBox="0 0 16 14">
 <path d="M2 4.500L3 1h3l.5 3.500zM9.500 4.500L10 1h3l1 3.500z" fill="#3c5a9a" stroke="#243c73" stroke-width=".6"/>
 <rect x=".5" y="4.500" width="6.500" height="8.500" rx="1" fill="#4c6db3" stroke="#243c73" stroke-width=".8"/>
 <rect x="9" y="4.500" width="6.500" height="8.500" rx="1" fill="#4c6db3" stroke="#243c73" stroke-width=".8"/>
 <rect x="7" y="5.500" width="2" height="3" fill="#243c73"/>
 <rect x="1.500" y="9" width="4.500" height="3" fill="#dfe7f6"/><rect x="10" y="9" width="4.500" height="3" fill="#dfe7f6"/>
</svg>
<div class="t k" style="left:1193px;top:56px">찾기</div>
<svg style="left:1174px;top:77px" width="17" height="17" viewBox="0 0 17 17">
 <text x="0" y="7.500" font-size="8.500" font-weight="bold" font-family="Noto Sans CJK KR,sans-serif" fill="#222">가</text>
 <text x="8" y="16" font-size="8.500" font-weight="bold" font-family="Noto Sans CJK KR,sans-serif" fill="#2e9a2e">나</text>
 <path d="M3.500 9.500c0 3 1 4 3 4M5 12l1.800 1.500L5 15" fill="none" stroke="#444" stroke-width="1"/>
</svg>
<div class="t k" style="left:1193px;top:78px">바꾸기</div>
<div class="dd" style="left:1234px;top:83px"></div>
<svg style="left:1177px;top:99px" width="11" height="16" viewBox="0 0 11 16">
 <path d="M.7 .8v12l2.800-2.600 2.200 4.800 2-.9-2.200-4.600h4z" fill="#fff" stroke="#33415c" stroke-width="1" stroke-linejoin="round"/>
</svg>
<div class="t k" style="left:1193px;top:100px">선택</div>
<div class="dd" style="left:1222px;top:105px"></div>
<div class="grp k" style="left:1166px;width:81px">편집</div>
<div class="sep" style="left:1246px"></div>
<!-- ===== LEFT PANEL ===== -->
<div class="abs" style="left:0;top:141px;width:1367px;height:4px;background:linear-gradient(to bottom,#a6abb3 0,#b9bdc4 1px,#c4c8ce 4px)"></div>
<div class="abs" style="left:0;top:145px;width:171px;height:561px;background:linear-gradient(to bottom,#d0d3d8 0,#c6c9ce 120px,#bdc0c6 561px);border-right:1px solid #8f949c"></div>
<div class="abs" style="left:171px;top:145px;width:4px;height:561px;background:linear-gradient(to right,#eef0f3,#dcdfe4)"></div>
<div class="abs" style="left:175px;top:145px;width:1px;height:561px;background:#9da2aa"></div>
<!-- tabs -->
<div class="abs" style="left:0;top:144px;width:71px;height:21px;background:linear-gradient(to bottom,#d9dce0,#cdd0d5);border-top:1px solid #a3a8af;box-shadow:inset 0 1px 0 #e6e8eb"></div>
<div class="abs" style="left:71px;top:144px;width:72px;height:21px;background:linear-gradient(to bottom,#cbced3,#b8bcc2);border:1px solid #969ba3;border-top-color:#9499a1"></div>
<div class="abs" style="left:143px;top:144px;width:28px;height:21px;background:linear-gradient(to bottom,#cbced3,#b8bcc2);border:1px solid #969ba3;border-left:none;border-top-color:#9499a1"></div>
<div class="t k" style="left:0;top:147px;width:71px;text-align:center;color:#3a3a3a;font-weight:400">슬라이드</div>
<div class="t k" style="left:71px;top:146px;width:72px;text-align:center;color:#3a3a3a">개요</div>
<svg style="left:156px;top:151px" width="9" height="9" viewBox="0 0 9 9"><path d="M1 1l7 7M8 1L1 8" stroke="#484848" stroke-width="2.100"/></svg>
<!-- scrollbar -->
<div class="abs" style="left:153px;top:165px;width:17px;height:541px;background:linear-gradient(to right,#d9dce1,#e6e9ed 40%,#dfe2e7)"></div>
<svg style="left:157px;top:171px" width="9" height="5" viewBox="0 0 9 5"><path d="M0 5L4.500 0 9 5z" fill="#444"/></svg>
<div class="abs" style="left:154px;top:183px;width:15px;height:125px;border:1px solid #8e939b;border-radius:2px;background:linear-gradient(to right,#f4f5f7,#e3e6ea 50%,#d3d7dc)"></div>
<div class="abs" style="left:158px;top:241px;width:7px;height:1px;background:#6d7178;box-shadow:0 2px 0 #6d7178,0 4px 0 #6d7178,0 6px 0 #6d7178"></div>
<svg style="left:157px;top:695px" width="9" height="5" viewBox="0 0 9 5"><path d="M0 0h9L4.500 5z" fill="#555"/></svg>
<!-- selected highlight -->
<div class="abs" style="left:3px;top:168px;width:147px;height:101px;border:1px solid #eebf4e;border-radius:3px;background:linear-gradient(to bottom,#fdf2cb 0,#fce9a6 25%,#fbdc76 55%,#fce492 72%,#fef3cf 88%,#fffbee 100%);box-shadow:inset 0 0 0 1px rgba(255,250,225,.8)"></div>
<!-- numbers -->
<div class="t num" style="left:8px;top:172px">1</div>
<div class="t num" style="left:8px;top:277px">2</div>
<div class="t num" style="left:8px;top:382px">3</div>
<div class="t num" style="left:8px;top:487px">4</div>
<div class="t num" style="left:8px;top:592px">5</div>
<div class="abs" style="left:0;top:697px;width:22px;height:9px;overflow:hidden"><div class="t num" style="left:8px;top:0px">6</div></div>
<!-- thumb 1 -->
<div class="thumb" style="top:172px"></div>
<div class="t" style="left:24px;top:206px;width:122px;text-align:center;font-size:7.500px;line-height:10px;font-weight:700;color:#111;font-family:'Noto Sans CJK KR',sans-serif;word-spacing:2px">사진 앨범</div>
<div class="t" style="left:24px;top:225px;width:121px;text-align:center;font-size:5px;line-height:8px;color:#777">- YG</div>
<!-- thumb 2 -->
<div class="thumb" style="top:277px"></div>
<svg style="left:25px;top:290px" width="120" height="68" viewBox="0 0 120 68">
 <rect width="120" height="68" fill="#fff"/>
 <rect width="120" height="4.500" fill="#1d3a66"/>
 <rect x="6" y="1.800" width="38" height="1.600" fill="#e8edf4"/><rect x="40" y="1.800" width="16" height="1.600" fill="#c9d3e1"/>
 <rect x="112" y=".5" width="7" height="1.500" fill="#c5553f"/>
 <rect y="4.500" width="120" height="1.800" fill="#e9eef5"/>
 <rect x="22" y="9" width="19" height="1.800" fill="#8b8b8b"/>
 <rect x="0" y="13" width="118.500" height="3.400" fill="#6b5f4a"/>
 <rect x="82" y="14" width="14" height="1.600" fill="#e9e6df"/>
 <rect x="22" y="14.200" width="56" height="1" fill="#b5ab97"/>
 <rect x="0" y="18" width="119" height="20" fill="#f7f3ea"/>
 <rect x="22.800" y="19.600" width="16.500" height="17" fill="#fff"/>
 <rect x="24" y="21" width="5" height=".8" fill="#999"/><rect x="24.500" y="24" width="6" height=".6" fill="#bbb"/><rect x="24.500" y="26" width="5" height=".6" fill="#bbb"/><rect x="24.500" y="28" width="6" height=".6" fill="#bbb"/>
 <rect x="40.800" y="19.600" width="55.400" height="17" fill="#050505"/>
 <ellipse cx="45" cy="28" rx="4.500" ry="5" fill="#a03cc0"/><ellipse cx="44" cy="28" rx="2.500" ry="3" fill="#e05a9a"/>
 <path d="M51 25l12-2.500v10L51 31z" fill="#8fa5b8"/><path d="M53 26l9-1.500v7l-9-1z" fill="#c8d6e2"/>
 <rect x="66" y="22" width="8" height="11" fill="#6c3a4a"/><rect x="68" y="23" width="4" height="6" fill="#d9c9cf"/>
 <rect x="74.500" y="22" width="7" height="11" fill="#1d7a35"/><circle cx="78" cy="27" r="2.200" fill="#35c35a"/>
 <path d="M83 23l11 10M94 23l-11 10" stroke="#b9c9de" stroke-width="1.600"/><rect x="90" y="22" width="6" height="11" fill="#103a55" opacity=".6"/>
 <rect x="69" y="34.500" width="25" height=".8" fill="#aaa"/>
 <rect x="22.800" y="42.200" width="6" height="1.200" fill="#555"/><circle cx="36.500" cy="42.800" r="1.600" fill="#4a7fd8"/>
 <rect x="22.800" y="47.500" width="6.500" height="1.400" fill="#444"/><rect x="34.500" y="46.500" width="3.500" height="1.400" fill="#9bc34a"/><rect x="36" y="48.500" width="2" height="2.200" fill="#5b6b3a"/>
 <rect x="22.800" y="53.500" width="6" height="1.400" fill="#444"/><rect x="34.500" y="52.500" width="3.500" height="1.400" fill="#9bc34a"/><rect x="36" y="54.500" width="2" height="2.200" fill="#5b6b3a"/>
 <rect x="22.800" y="59.800" width="6" height="1.400" fill="#444"/><rect x="34" y="58.500" width="4" height="1.600" fill="#e8604a"/>
 <rect x="41" y="41.500" width="5" height=".7" fill="#bbb"/><rect x="48" y="41.500" width="4" height=".7" fill="#bbb"/><rect x="55" y="41.500" width="4" height=".7" fill="#bbb"/><rect x="60" y="41.500" width="5" height=".7" fill="#bbb"/>
 <rect x="41" y="45.200" width="5" height=".7" fill="#999"/><rect x="50.500" y="45" width="21" height="1.100" fill="#3a3ad0"/>
 <rect x="41" y="47.200" width="5" height=".7" fill="#999"/><rect x="50.500" y="47" width="15" height="1.100" fill="#f07a20"/>
 <g fill="#8a8a8a"><rect x="41" y="50" width="4" height=".7"/><rect x="50.500" y="50" width="5" height=".8"/><rect x="41" y="52.300" width="4" height=".7"/><rect x="50.500" y="52.300" width="24" height=".8"/><rect x="41" y="54.600" width="6" height=".7"/><rect x="50.500" y="54.600" width="30" height=".8"/><rect x="41" y="57" width="4" height=".7"/><rect x="50.500" y="57" width="24" height=".8"/><rect x="41" y="59.300" width="6" height=".7"/><rect x="50.500" y="59.300" width="18" height=".8"/><rect x="41" y="61.600" width="4" height=".7"/><rect x="50.500" y="61.600" width="28" height=".8"/></g>
 <g fill="#7d93c8"><rect x="89" y="50" width="5" height=".8"/><rect x="89" y="52.300" width="3.500" height=".8"/><rect x="89" y="54.600" width="3.500" height=".8"/><rect x="89" y="57" width="3.500" height=".8"/><rect x="89" y="59.300" width="3.500" height=".8"/><rect x="89" y="61.600" width="4" height=".8"/></g>
 <g fill="#c2c2c2"><rect x="83.500" y="50" width="4" height=".7"/><rect x="83.500" y="52.300" width="4" height=".7"/><rect x="83.500" y="54.600" width="4" height=".7"/><rect x="83.500" y="57" width="4" height=".7"/><rect x="83.500" y="59.300" width="4" height=".7"/></g>
 <rect x="118.600" y="4.500" width="1.400" height="59" fill="#d6dbe3"/>
 <rect y="64" width="120" height="4" fill="#16305a"/>
 <g><rect x="1.500" y="64.600" width="2.600" height="2.800" fill="#3a8ad0"/><rect x="6" y="64.600" width="3" height="2.800" fill="#f0a030"/><rect x="12" y="64.600" width="2.600" height="2.800" fill="#8a94a5"/><rect x="18" y="64.600" width="2.600" height="2.800" fill="#a9c6e6"/><rect x="23" y="64.600" width="3.500" height="2.800" fill="#5a89c9"/><rect x="28.500" y="64.600" width="2.600" height="2.800" fill="#d94a38"/><rect x="34" y="64.600" width="3" height="2.800" fill="#f0d880"/><rect x="39.500" y="64.600" width="2.600" height="2.800" fill="#2f5fb0"/><rect x="45" y="64.600" width="2.600" height="2.800" fill="#8a5a20"/><rect x="50.500" y="64.600" width="2.600" height="2.800" fill="#a0701c"/><rect x="56" y="64.600" width="3" height="2.800" fill="#c9d8ee"/><rect x="61.500" y="64.600" width="2.600" height="2.800" fill="#b9c9dd"/><rect x="66" y="64.600" width="3" height="2.800" fill="#e9d9d0"/></g>
 <rect x="89" y="65" width="9" height="2" fill="#4a628a"/><rect x="100" y="65.300" width="12" height="1.500" fill="#8a9bb8"/><rect x="113.500" y="65" width="5" height="2.200" fill="#5f7498"/>
</svg>
<!-- thumb 3 -->
<div class="thumb" style="top:382px"></div>
<svg style="left:25px;top:411px" width="120" height="37" viewBox="0 0 120 37">
 <defs>
  <linearGradient id="tnavy" x1="0" y1="0" x2="1" y2="1"><stop offset="0" stop-color="#0f2242"/><stop offset=".6" stop-color="#1c3a66"/><stop offset="1" stop-color="#21426f"/></linearGradient>
  <g id="mtb">
   <rect x="0" y="0" width="120" height="11.500" fill="#1a3560"/>
   <rect x="0" y="0" width="120" height=".6" fill="#4a6288"/>
   <circle cx="7.500" cy="6" r="5" fill="#2f7fc0"/><circle cx="7.500" cy="6" r="3.600" fill="#6fb6e0"/><path d="M5.200 4.200h2v1.800h-2z" fill="#e8552f"/><path d="M7.800 4.200h2v1.800h-2z" fill="#7fc241"/><path d="M5.200 6.400h2v1.800h-2z" fill="#3fa0e0"/><path d="M7.800 6.400h2v1.800h-2z" fill="#f5c51a"/>
   <rect x="17" y=".8" width="17" height="10.400" rx="1" fill="#4f688c" stroke="#8a9bb6" stroke-width=".5"/>
   <rect x="21" y="2" width="9" height="8" fill="#f6c042"/><rect x="22.500" y="3.500" width="4" height="4.500" fill="#fff3c9"/><circle cx="28" cy="4.500" r="1.600" fill="#fff"/>
   <circle cx="43" cy="6" r="3.800" fill="#f2f2f2"/><circle cx="43" cy="6" r="2.600" fill="#222"/><circle cx="43" cy="6" r="1.200" fill="#8ac43a"/><rect x="45" y="6.500" width="3" height="3.500" fill="#3f7fd0"/><rect x="45.500" y="7" width="2" height="1.200" fill="#f5d030"/>
   <path d="M60 2l6-.5-2.500 9-6 .3z" fill="#9fc9e9"/><path d="M61 2.500l4-.3-2 7-4 .2z" fill="#e9f4fc"/>
   <rect x="71.500" y=".8" width="17" height="10.400" rx="1" fill="#4f688c" stroke="#8a9bb6" stroke-width=".5"/>
   <text x="76" y="10" font-size="10.500" font-style="italic" font-weight="bold" font-family="Liberation Sans,sans-serif" fill="#49a8f0">e</text>
   <path d="M75 8c2-5 9-7 12-5" fill="none" stroke="#f5c51a" stroke-width="1"/>
   <circle cx="98" cy="6" r="4.300" fill="#e5402c"/><path d="M98 6l-3.700-2.200a4.300 4.300 0 0 0 1.600 6z" fill="#35a84f"/><path d="M98 6l-2.100 3.800a4.300 4.300 0 0 0 6.300-3.800z" fill="#f8c21c"/><circle cx="98" cy="6" r="1.900" fill="#fff"/><circle cx="98" cy="6" r="1.400" fill="#3f83e8"/>
   <path d="M111 3h4l1 1h4v7h-9z" fill="#f0d988"/><rect x="112" y="6.500" width="8" height="4" fill="#9cc6ea"/>
  </g>
 </defs>
 <rect width="120" height="37" fill="url(#tnavy)"/>
 <rect x="2.500" y="0" width="73.500" height="23.300" fill="#fbfcfe"/>
 <rect x="2.500" y="10" width="73.500" height="13.300" fill="#eef2f8"/>
 <rect x="2.800" y="1.200" width="73" height="8" fill="#fff" stroke="#e8141c" stroke-width="1.100"/>
 <path d="M6 4l1.500 1.200L6 6.400z" fill="#222"/>
 <text x="14" y="7" font-size="3.600" font-weight="bold" font-family="Noto Sans CJK KR,sans-serif" fill="#222">모든 프로그램</text>
 <rect x="6.300" y="13.500" width="64.200" height="6.300" rx="1" fill="#fff" stroke="#9aa5b5" stroke-width=".5"/>
 <text x="9" y="18.200" font-size="3.400" font-style="italic" font-family="Noto Sans CJK KR,sans-serif" fill="#777">프로그램 및 파일 검색</text>
 <circle cx="66.500" cy="16" r="1.200" fill="none" stroke="#3f6fc0" stroke-width=".6"/><path d="M65.700 17l-1.200 1.400" stroke="#3f6fc0" stroke-width=".7"/>
 <rect x="78" y="14" width="24" height="5.500" fill="#6d7f9c" stroke="#a9b5c8" stroke-width=".4"/><rect x="102" y="14" width="5" height="5.500" fill="#6d7f9c" stroke="#a9b5c8" stroke-width=".4"/>
 <text x="80" y="18.200" font-size="3.400" font-family="Noto Sans CJK KR,sans-serif" fill="#fff">시스템 종료</text><path d="M103.800 15.500l1.600 1.200-1.600 1.200z" fill="#fff"/>
 <use href="#mtb" y="25.500"/>
</svg>
<!-- thumb 4 -->
<div class="thumb" style="top:487px"></div>
<svg style="left:27px;top:489px" width="116" height="90" viewBox="0 0 116 90">
 <defs><linearGradient id="tnavy4" x1="0" y1="0" x2="0" y2="1"><stop offset="0" stop-color="#0e1f3c"/><stop offset=".6" stop-color="#122a50"/><stop offset="1" stop-color="#264a78"/></linearGradient></defs>
 <rect width="116" height="90" fill="url(#tnavy4)"/>
 <rect x="2" y="0" width="71" height="76" fill="#fff"/>
 <rect x="2" y="62" width="71" height="14" fill="#eef2f8"/>
 <rect x="2.500" y="1" width="69" height="6" fill="#cfe4fa"/>
 <rect x="1" y=".5" width="71" height="7" fill="none" stroke="#e8141c" stroke-width="1.100"/>
 <g fill="#f0c53a"><rect x="4" y="2" width="3.200" height="3.500"/><rect x="4" y="7.800" width="3.200" height="3.500"/><rect x="4" y="13.100" width="3.200" height="3.500"/><rect x="4" y="18.400" width="3.200" height="3.500"/><rect x="4" y="23.700" width="3.200" height="3.500"/><rect x="4" y="29" width="3.200" height="3.500"/><rect x="4" y="34.300" width="3.200" height="3.500"/><rect x="4" y="39.600" width="3.200" height="3.500"/><rect x="4" y="44.900" width="3.200" height="3.500"/><rect x="4" y="50.200" width="3.200" height="3.500"/></g>
 <g font-size="3.500" font-family="Noto Sans CJK KR,sans-serif" fill="#2a2a2a" font-weight="bold">
  <text x="9" y="5.200">보조프로그램</text><text x="9" y="11">삼성 DM 포럼</text><text x="9" y="16.300">시작프로그램</text><text x="9" y="21.600">알툴즈</text><text x="9" y="26.900">유지 관리</text><text x="9" y="32.200">이스트소프트</text><text x="9" y="37.500">인텔 PROSet 무선</text><text x="9" y="42.800">인하대학교 무선랜 접속</text><text x="9" y="48.100">파일구리</text><text x="9" y="53.400">한글과컴퓨터</text>
  <text x="13" y="61.500">뒤로</text>
 </g>
 <path d="M6.500 58.800v2.600l-1.600-1.300z" fill="#222"/>
 <rect x="67.500" y="8" width="4" height="47" fill="#f0f1f3"/><rect x="68" y="23" width="3" height="26" rx="1" fill="#c9ccd2" stroke="#a0a4ab" stroke-width=".4"/>
 <rect x="2" y="55.500" width="69" height=".5" fill="#d9dde4"/>
 <rect x="5" y="67" width="62.500" height="6" rx="1" fill="#fff" stroke="#9aa5b5" stroke-width=".5"/>
 <text x="8" y="71.500" font-size="3.400" font-style="italic" font-family="Noto Sans CJK KR,sans-serif" fill="#777">프로그램 및 파일 검색</text>
 <circle cx="64" cy="69.500" r="1.200" fill="none" stroke="#3f6fc0" stroke-width=".6"/><path d="M63.200 70.500l-1.200 1.400" stroke="#3f6fc0" stroke-width=".7"/>
 <g font-size="3.600" font-family="Noto Sans CJK KR,sans-serif" fill="#fff"><text x="77" y="3">기본 프로그램</text><text x="77" y="12.500">도움말 및 지원</text></g>
 <rect x="75.500" y="67.500" width="22" height="5" fill="#6d7f9c" stroke="#a9b5c8" stroke-width=".4"/><rect x="97.500" y="67.500" width="5" height="5" fill="#6d7f9c" stroke="#a9b5c8" stroke-width=".4"/>
 <text x="77" y="71.400" font-size="3.200" font-family="Noto Sans CJK KR,sans-serif" fill="#fff">시스템 종료</text><path d="M99.300 68.800l1.600 1.200-1.600 1.200z" fill="#fff"/>
 <svg x="0" y="78" width="116" height="12" viewBox="0 0 116 12" style="overflow:hidden;position:static"><use href="#mtb" x="-1" y=".3"/></svg>
</svg>
<!-- thumb 5 -->
<div class="thumb" style="top:592px"></div>
<svg style="left:52px;top:594px" width="66" height="90" viewBox="0 0 66 90">
 <defs><linearGradient id="tnavy5" x1="0" y1="0" x2="0" y2="1"><stop offset="0" stop-color="#0e1f3c"/><stop offset=".6" stop-color="#122a50"/><stop offset="1" stop-color="#264a78"/></linearGradient></defs>
 <rect width="66" height="90" fill="url(#tnavy5)"/>
 <rect x="1.400" y="0" width="40.600" height="81.300" fill="#fff"/>
 <rect x="1.400" y="72" width="40.600" height="9.300" fill="#eef2f8"/>
 <rect x="50" y="0" width="9" height="4.500" fill="#0a1a33" stroke="#8fb0d8" stroke-width=".6"/><rect x="52" y="1.300" width="5" height="1.800" fill="#6fb0e8"/>
 <g fill="#f0c53a"><rect x="2.500" y="2" width="2" height="2.200"/><rect x="5.500" y="59.500" width="2" height="2.200"/><rect x="5.500" y="62.600" width="2" height="2.200"/><rect x="5.500" y="56.400" width="2" height="2.200"/><rect x="5.500" y="53.300" width="2" height="2.200"/><rect x="2.500" y="65.800" width="2" height="2.200"/><rect x="5.500" y="32" width="2" height="1.800"/></g>
 <g fill="#4a78c8"><rect x="5.500" y="5.200" width="2" height="2"/><rect x="5.500" y="8.300" width="2" height="2"/><rect x="5.500" y="35.500" width="2" height="2"/><rect x="5.500" y="38.600" width="2" height="2"/><rect x="5.500" y="44.800" width="2" height="2"/><rect x="5.500" y="50.500" width="2" height="2"/></g>
 <g fill="#9fb3c8"><rect x="5.500" y="11.400" width="2" height="2"/><rect x="5.500" y="14.500" width="2" height="2"/><rect x="5.500" y="17.600" width="2" height="2"/><rect x="5.500" y="23.800" width="2" height="2"/><rect x="5.500" y="29" width="2" height="2"/><rect x="5.500" y="41.700" width="2" height="2"/></g>
 <rect x="5.500" y="20.500" width="2" height="2" fill="#46a53a"/><rect x="5.300" y="26.600" width="2.600" height="2" fill="#111"/>
 <g fill="#555">
  <rect x="5.500" y="2.500" width="11" height="1.100"/><rect x="9" y="5.700" width="18" height="1.100"/><rect x="9" y="8.800" width="13" height="1.100"/><rect x="9" y="11.900" width="5" height="1.100"/><rect x="9" y="15" width="5" height="1.100"/><rect x="9" y="18.100" width="5" height="1.100"/><rect x="9" y="21.200" width="9" height="1.100"/><rect x="9" y="24.300" width="5" height="1.100"/><rect x="9" y="27.400" width="12" height="1.100"/><rect x="9" y="30.500" width="12" height="1.100"/><rect x="9" y="33.600" width="10" height="1.100"/><rect x="9" y="36.700" width="4" height="1.100"/><rect x="9" y="39.800" width="4" height="1.100"/><rect x="9" y="42.900" width="7" height="1.100"/><rect x="9" y="46" width="16" height="1.100"/><rect x="9" y="52.200" width="13" height="1.100"/><rect x="9" y="55.300" width="7" height="1.100"/><rect x="9" y="58.400" width="17" height="1.100"/><rect x="9" y="61.500" width="10" height="1.100"/><rect x="9" y="64.600" width="6" height="1.100"/><rect x="5.500" y="67.700" width="14" height="1.100"/><rect x="9" y="72.700" width="3" height="1.100"/>
 </g>
 <rect x="1.400" y="47.600" width="41" height="2.600" fill="#cfe4fa"/><rect x="9" y="48.300" width="9" height="1.100" fill="#444"/>
 <rect x=".8" y="47.300" width="42" height="3.500" fill="none" stroke="#e0202c" stroke-width=".9"/>
 <path d="M4.500 72.300v2l-1.200-1z" fill="#222"/>
 <rect x="40" y="1" width="1.800" height="67" fill="#eef0f3"/><rect x="40.200" y="53" width="1.400" height="8" fill="#c4c8cf"/>
 <rect x="3.500" y="76.300" width="35.500" height="3.500" rx=".5" fill="#fff" stroke="#9aa5b5" stroke-width=".4"/><rect x="5.500" y="77.600" width="20" height=".8" fill="#aaa"/>
 <circle cx="37" cy="77.800" r=".8" fill="none" stroke="#3f6fc0" stroke-width=".4"/>
 <g fill="#e6ebf3"><rect x="45" y="8.500" width="2.500" height="1.200"/><rect x="45" y="14.500" width="3.500" height="1.200"/><rect x="45" y="20.500" width="5.500" height="1.200"/><rect x="45" y="26.500" width="5.500" height="1.200"/><rect x="45" y="32.500" width="12.500" height="1.200"/><rect x="45" y="38" width="11.500" height="1.200"/><rect x="45" y="43.500" width="12.500" height="1.200"/></g>
 <rect x="44" y="76.500" width="12.500" height="3" fill="#6d7f9c" stroke="#a9b5c8" stroke-width=".3"/><rect x="56.500" y="76.500" width="3" height="3" fill="#6d7f9c" stroke="#a9b5c8" stroke-width=".3"/>
 <svg x="0" y="82.500" width="66" height="7.500" viewBox="0 0 116 12" preserveAspectRatio="xMinYMin meet" style="overflow:hidden;position:static"><use href="#mtb" x="-1" y=".3"/></svg>
</svg>
<!-- thumb 6 -->
<div class="abs" style="left:23px;top:697px;width:124px;height:9px;background:#fff;border:1px solid rgba(120,124,130,.6);border-bottom:none"></div>
<!-- ===== MAIN ===== -->
<div id="slide" class="abs"></div>
<div class="t" style="left:438px;top:336px;width:650px;text-align:center;font-size:42.500px;line-height:56px;color:#000;font-weight:300;font-family:'Noto Sans CJK KR',sans-serif;word-spacing:6px">사진 앨범</div>
<div class="t" style="left:438px;top:439px;width:650px;text-align:center;font-size:29px;line-height:34px;color:#898989;font-family:'Liberation Sans','Noto Sans CJK KR',sans-serif">- YG</div>
<!-- vertical scrollbar -->
<div class="abs" style="left:1350px;top:145px;width:16px;height:518px;background:linear-gradient(to right,#d6dae0,#e4e7ec 45%,#dde0e6)"></div>
<svg style="left:1353px;top:150px" width="9" height="5" viewBox="0 0 9 5"><path d="M0 5L4.500 0 9 5z" fill="#444"/></svg>
<div class="abs" style="left:1350px;top:161px;width:15px;height:31px;border:1px solid #8e939b;border-radius:2px;background:linear-gradient(to right,#f6f7f9,#e6e9ed 50%,#d3d7dc)"></div>
<div class="abs" style="left:1354px;top:173px;width:8px;height:1px;background:#777b82;box-shadow:0 2px 0 #777b82,0 4px 0 #777b82,0 6px 0 #777b82"></div>
<svg style="left:1353px;top:603px" width="9" height="5" viewBox="0 0 9 5"><path d="M0 0h9L4.500 5z" fill="#555"/></svg>
<div class="abs" style="left:1350px;top:613px;width:16px;height:1px;background:#c3c7ce"></div>
<svg style="left:1354px;top:619px" width="8" height="10" viewBox="0 0 8 10"><path d="M0 4.500L4 0l4 4.500zM0 9.500L4 5l4 4.500z" fill="#111"/></svg>
<svg style="left:1354px;top:634px" width="8" height="10" viewBox="0 0 8 10"><path d="M0 0h8L4 4.500zM0 5h8L4 9.500z" fill="#111"/></svg>
<!-- splitter + notes -->
<div class="abs" style="left:176px;top:663px;width:1190px;height:1px;background:#a4a9b1"></div>
<div class="abs" style="left:176px;top:664px;width:1190px;height:4px;background:#eceef2"></div>
<div class="abs" style="left:176px;top:668px;width:1190px;height:1px;background:#a4a9b1"></div>
<div class="abs" style="left:176px;top:669px;width:1174px;height:37px;background:#fff"></div>
<div class="abs" style="left:1350px;top:669px;width:16px;height:37px;background:linear-gradient(to right,#d6dae0,#e4e7ec 45%,#dde0e6)"></div>
<svg style="left:1353px;top:675px" width="9" height="5" viewBox="0 0 9 5"><path d="M0 5L4.500 0 9 5z" fill="#a9adb4"/></svg>
<svg style="left:1353px;top:694px" width="9" height="5" viewBox="0 0 9 5"><path d="M0 0h9L4.500 5z" fill="#a9adb4"/></svg>
<div class="t" style="left:187px;top:674px;font-size:16.500px;line-height:20px;color:#000;font-weight:300;font-family:'Liberation Sans','Noto Sans CJK KR',sans-serif;word-spacing:4.500px">여기에 슬라이드 노트의 내용을 입력하십시오</div>
<!-- ===== STATUS BAR ===== -->
<div class="t" style="left:8px;top:710px;color:#3a3a3a"><span class="k" style="font-weight:400;color:#454545">슬라이드</span> <span style="font-size:13.500px">1/14</span></div>
<div class="ssep" style="left:95px"></div>
<div class="t" style="left:105px;top:710px;color:#3a3a3a"><span style="font-size:13px">"Office</span> <span class="k" style="font-weight:400;color:#454545">테마</span><span style="font-size:13px">"</span></div>
<div class="ssep" style="left:184px"></div>
<svg style="left:193px;top:709px" width="17" height="15" viewBox="0 0 17 15">
 <path d="M.5 9.500L5 6.500l7 1.500 1.500 3.500L8 14z" fill="#e9eef7" stroke="#3a5a9a" stroke-width=".9" stroke-linejoin="round"/>
 <path d="M.5 9.500L8 12.500V14L.5 11z" fill="#5a7ec0" stroke="#2f4f8f" stroke-width=".6"/>
 <path d="M8 12.500l5.500-1.500v1.500L8 14z" fill="#3f63aa" stroke="#2f4f8f" stroke-width=".6"/>
 <path d="M6 5.500l2.500 3L15 .8" fill="none" stroke="#2f5fc8" stroke-width="2"/>
</svg>
<div class="t k" style="left:227px;top:710px;color:#454545;font-weight:400">한국어</div>
<div class="ssep" style="left:271px"></div>
<div class="ssep" style="left:1077px"></div>
<div class="abs" style="left:1082px;top:708px;width:19px;height:19px;border:1px solid #e0ab3c;border-radius:2px;background:linear-gradient(#fde08c,#fbd05a 60%,#fcdc7c)"></div>
<div class="abs" style="left:1100px;top:708px;width:19px;height:19px;border:1px solid #ecc665;border-radius:2px;background:linear-gradient(#fef3cf,#fde9a6 60%,#fef0bf)"></div>
<svg style="left:1086px;top:712px" width="12" height="11" viewBox="0 0 12 11"><rect x=".5" y=".5" width="11" height="10" fill="#fff" stroke="#444"/><path d="M4.500 .5v10M4.500 5.500h7" stroke="#444"/><rect x="6" y="2" width="4" height="2" fill="#666"/></svg>
<svg style="left:1104px;top:712px" width="12" height="11" viewBox="0 0 12 11"><rect x=".5" y=".5" width="4.500" height="4" fill="#fff" stroke="#555"/><rect x="7" y=".5" width="4.500" height="4" fill="#fff" stroke="#555"/><rect x=".5" y="6.500" width="4.500" height="4" fill="#fff" stroke="#555"/><rect x="7" y="6.500" width="4.500" height="4" fill="#fff" stroke="#555"/></svg>
<svg style="left:1123px;top:711px" width="11" height="12" viewBox="0 0 11 12"><path d="M.5 1.500h4l1 1 1-1h4v8.500h-4l-1 1-1-1h-4z" fill="#fff" stroke="#555" stroke-width=".9"/><path d="M5.500 2.500v8.500M2 4h2M2 6h2M2 8h2M7 4h2M7 6h2M7 8h2" stroke="#555" stroke-width=".8"/></svg>
<svg style="left:1141px;top:711px" width="13" height="12" viewBox="0 0 13 12"><path d="M.5 1h12" stroke="#444" stroke-width="1.400"/><rect x="1.500" y="2" width="10" height="5.500" fill="#fff" stroke="#555" stroke-width=".9"/><path d="M6.500 7.500v2.500M3.500 11l3-1.500 3 1.500" fill="none" stroke="#555" stroke-width="1"/></svg>
<div class="t" style="left:1166px;top:709px;color:#3a3a3a;font-size:12.500px">68%</div>
<div class="abs" style="left:1221px;top:717px;width:100px;height:1px;background:#8f949c;box-shadow:0 1px 0 #eef0f3"></div>
<div class="abs" style="left:1270px;top:713px;width:1px;height:9px;background:#8f949c;box-shadow:1px 0 0 #eef0f3"></div>
<div class="abs" style="left:1205px;top:709px;width:16px;height:16px;border:1px solid #8a8f97;border-radius:8px;background:radial-gradient(circle at 50% 35%,#fff,#e6e8ec 60%,#d3d6db)"></div>
<div class="abs" style="left:1209px;top:716px;width:8px;height:2px;background:#555"></div>
<div class="abs" style="left:1321px;top:709px;width:16px;height:16px;border:1px solid #8a8f97;border-radius:8px;background:radial-gradient(circle at 50% 35%,#fff,#e6e8ec 60%,#d3d6db)"></div>
<div class="abs" style="left:1325px;top:716px;width:8px;height:2px;background:#555"></div>
<div class="abs" style="left:1328px;top:713px;width:2px;height:8px;background:#555"></div>
<svg style="left:1251px;top:710px" width="9" height="14" viewBox="0 0 9 14"><path d="M.5 .5h8v8L4.500 13 .5 8.500z" fill="#f2f3f5" stroke="#7a7f87" stroke-linejoin="round"/></svg>
<svg style="left:1345px;top:709px" width="16" height="16" viewBox="0 0 16 16"><rect x=".5" y=".5" width="15" height="15" rx="1.500" fill="#dfe2e6" stroke="#6f747c"/><path d="M4.500 2v2.500H2M11.500 2v2.500H14M4.500 14v-2.500H2M11.500 14v-2.500H14" fill="none" stroke="#333" stroke-width="1"/><path d="M8 3.500v9M3.500 8h9" stroke="#555" stroke-width="1" stroke-dasharray="1 1"/></svg>
<!-- ===== TASKBAR ===== -->
<div class="abs" style="left:880px;top:729px;width:487px;height:39px;background:linear-gradient(to right,rgba(8,16,36,0),rgba(8,16,36,.3) 160px,rgba(8,16,36,.38) 487px)"></div>
<div class="tb on" style="left:61px;width:57px"></div>
<div class="tb on" style="left:247px;width:57px"></div>
<div class="tb act" style="left:748px;width:52px;opacity:.8"></div>
<div class="tb act" style="left:743px;width:53px"></div>
<div class="tb on" style="left:805px;width:57px"></div>
<div class="tb on" style="left:867px;width:57px"></div>
<!-- start orb -->
<svg style="left:8px;top:729px" width="38" height="38" viewBox="0 0 38 38">
 <defs>
  <radialGradient id="orb" cx=".5" cy=".35" r=".75"><stop offset="0" stop-color="#6fb4e6"/><stop offset=".45" stop-color="#2d6fb2"/><stop offset=".8" stop-color="#173f7a"/><stop offset="1" stop-color="#1e4a86"/></radialGradient>
  <radialGradient id="orbglow" cx=".5" cy="1" r=".6"><stop offset="0" stop-color="#35d0ff"/><stop offset="1" stop-color="#35d0ff" stop-opacity="0"/></radialGradient>
 </defs>
 <circle cx="19" cy="19" r="18.300" fill="url(#orb)" stroke="#9fc4e6" stroke-width=".9"/>
 <circle cx="19" cy="19" r="17.500" fill="url(#orbglow)"/>
 <path d="M3.500 14C8 4 30 4 34.500 14 28 10 10 10 3.500 14z" fill="#fff" opacity=".28"/>
 <g transform="translate(19 19.500) scale(1.450) translate(-17.800 -19)">
 <path d="M11.500 11.500c2.500-1.200 4.500-1 6.500.3l-1.500 6.200c-2-1.300-4-1.500-6.500-.3z" fill="#f0532a"/>
 <path d="M19.500 12.200c2 1.200 4 1.400 6.500.2l-1.500 6.300c-2.500 1.200-4.500 1-6.500-.3z" fill="#7fc241"/>
 <path d="M9.700 19.200c2.500-1.200 4.500-1 6.500.3l-1.500 6.200c-2-1.300-4-1.500-6.500-.3z" fill="#3b9be6"/>
 <path d="M17.700 19.900c2 1.200 4 1.400 6.500.2l-1.500 6.300c-2.500 1.200-4.500 1-6.500-.3z" fill="#fbc21d"/>
 </g>
</svg>
<!-- outlook -->
<svg style="left:73px;top:732px" width="31" height="30" viewBox="0 0 31 30">
 <defs><linearGradient id="olg" x1="0" y1="0" x2="1" y2="1"><stop offset="0" stop-color="#fdeaa0"/><stop offset=".45" stop-color="#fbcf5a"/><stop offset="1" stop-color="#f5ab28"/></linearGradient></defs>
 <rect x=".7" y=".7" width="28" height="28" fill="url(#olg)" stroke="#e0901a" stroke-width="1.200"/>
 <rect x="1.800" y="1.800" width="25.800" height="25.800" fill="none" stroke="#fde9a9" stroke-width="1"/>
 <path d="M8 27.500l10-9 9.500 3.500v5.500z" fill="#fdf6e3"/><path d="M11 27.500l9-7 7.500 2.500" fill="none" stroke="#f0c46a" stroke-width=".8"/>
 <ellipse cx="11.500" cy="12.500" rx="5.300" ry="7.300" fill="none" stroke="#e8820c" stroke-width="4.200"/>
 <circle cx="25" cy="12.500" r="4.800" fill="#fff6dc" stroke="#f0a92c" stroke-width="1"/>
 <path d="M25 9.500v3.300l2.300 1" fill="none" stroke="#d8481c" stroke-width="1"/>
</svg>
<!-- media player -->
<svg style="left:134px;top:731px" width="34" height="34" viewBox="0 0 34 34">
 <path d="M25 3l2.500-2.500 4.500 9.500-1 .5-4-5.500z" fill="#e9e9ea" stroke="#9a9a9c" stroke-width=".5"/>
 <circle cx="15" cy="17" r="12.800" fill="#ececed" stroke="#8a8a8c" stroke-width=".8"/>
 <circle cx="15" cy="17" r="9.300" fill="#151515"/>
 <path d="M11.500 11.500l9 5.500-9 5.500z" fill="#7dc92f"/>
 <path d="M25.500 17.500c2 1.200 4.500 1.700 6.500 1.500 0 6-2 10-6.500 13-4.500-3-6.500-7-6.500-13 2 .2 4.500-.3 6.500-1.500z" fill="#e9edf2" stroke="#8a8f98" stroke-width=".7"/>
 <path d="M25.500 19.300v5.700h-5c-.3-1.500-.4-3-.4-4.500 1.800 0 3.800-.4 5.400-1.200z" fill="#3a6fd0"/>
 <path d="M25.500 19.300c1.600.8 3.600 1.200 5.400 1.200 0 1.500-.1 3-.4 4.500h-5z" fill="#f8cb1c"/>
 <path d="M20.500 25h5v5.700c-2.600-1.500-4.200-3.300-5-5.700z" fill="#f8cb1c"/>
 <path d="M25.500 25h5c-.8 2.400-2.400 4.200-5 5.700z" fill="#3a6fd0"/>
</svg>
<!-- notepad -->
<svg style="left:196px;top:732px" width="32" height="31" viewBox="0 0 32 31">
 <defs><linearGradient id="npg" x1="0" y1="0" x2="1" y2="1"><stop offset="0" stop-color="#c9edf7"/><stop offset=".5" stop-color="#5fb2cf"/><stop offset="1" stop-color="#8ed0e6"/></linearGradient></defs>
 <path d="M27 5l3.500 1.500-4 23-3.500-1.500z" fill="#c8a257"/>
 <path d="M12 2l17 3.500-5.500 24L1.500 23z" fill="#f4f4f2" stroke="#9a9a98" stroke-width=".5"/>
 <path d="M11 3.500l15.500 3-5 21L2.500 22z" fill="url(#npg)"/>
 <path d="M12 1.500l17 3.500-.5 2.200L11.500 3.700z" fill="#d9dadc" stroke="#8f9092" stroke-width=".5"/>
 <path d="M13 1v2.500M15.500 1.500V4M18 2v2.500M20.500 2.500V5M23 3v2.500M25.500 3.500V6M28 4v2.500" stroke="#6f7072" stroke-width=".9"/>
 <path d="M24 28.500l2.500-12" stroke="#e9e9e6" stroke-width="1.400"/>
</svg>
<!-- IE -->
<svg style="left:257px;top:731px" width="38" height="34" viewBox="0 0 38 34">
 <defs><linearGradient id="ieg" x1="0" y1="0" x2="0" y2="1"><stop offset="0" stop-color="#7fd0fb"/><stop offset=".5" stop-color="#2f9ae8"/><stop offset="1" stop-color="#1b78d0"/></linearGradient></defs>
 <path d="M19.500 5.500C11.500 5.500 6.500 11 6.500 18c0 7.500 5.300 12.500 13 12.500 5.500 0 9.500-2.800 11.300-7.500h-7.300c-.8 1.500-2.300 2.300-4.200 2.300-3 0-5-2-5.300-5h17.300c.6-8.300-4-14.800-11.800-14.800zm-5.300 10c.5-2.800 2.500-4.500 5.200-4.500s4.500 1.700 4.800 4.500z" fill="url(#ieg)" stroke="#1a5fb0" stroke-width=".5"/>
 <path d="M3.500 28.500C.5 22.500 8 10.500 20 4.500 28 0.500 35.500 1 36 6c.2 2-1 4.500-2.500 6.500 1-3 .5-5.500-2.500-5.800-5-.6-14 4.500-20 11.500-4.500 5.300-6 9-4.300 11z" fill="#f8c81c" stroke="#d8a010" stroke-width=".5"/>
</svg>
<!-- chrome -->
<svg style="left:322px;top:732px" width="31" height="31" viewBox="0 0 31 31">
 <circle cx="15.500" cy="15.500" r="14.500" fill="#e03c2c"/>
 <path d="M15.500 15.500L3 8.200A14.500 14.500 0 0 0 9 28.500z" fill="#2fa34c"/>
 <path d="M15.500 15.500L9 28.500A14.500 14.500 0 0 0 30 15.500z" fill="#fbc41c"/>
 <path d="M15.500 15.500H30A14.500 14.500 0 0 0 28.800 9.800z" fill="#e8b81a"/>
 <path d="M15.500 9h13.200A14.500 14.500 0 0 0 3 8.200l6.500 4z" fill="#e03c2c"/>
 <circle cx="15.500" cy="15.500" r="6.700" fill="#f4f4f4"/>
 <circle cx="15.500" cy="15.500" r="5.300" fill="#3f86e8"/>
 <path d="M10.500 13.500a5.300 5.300 0 0 1 10 0c-3-1.500-7-1.500-10 0z" fill="#7fb4f4"/>
</svg>
<!-- explorer -->
<svg style="left:382px;top:733px" width="35" height="32" viewBox="0 0 35 32">
 <path d="M2 5.500c0-1 .8-2 2-2h8l2 2.500h17c1.200 0 2 .8 2 2v17H2z" fill="#f2dc8c" stroke="#c9a94a" stroke-width=".7"/>
 <rect x="5" y="3" width="3" height="1.700" fill="#d8382c"/><rect x="9" y="3" width="3" height="1.700" fill="#3f9a3a"/>
 <path d="M1 10.500c0-1 .8-1.500 1.800-1.500H32c1 0 1.800.6 1.700 1.600l-1 14.400H2z" fill="#f8e9a9" stroke="#d4b85a" stroke-width=".6"/>
 <rect x="16" y="7" width="3" height="1.600" fill="#d8382c"/>
 <path d="M7 29.500v-9c0-1.500 1-2.500 2.500-2.500h16c1.500 0 2.500 1 2.500 2.500v9h-4.500v-6.500h-12v6.500z" fill="#9fcdf2" stroke="#5a93c9" stroke-width=".8"/>
 <path d="M8.500 21c0-1 .8-1.700 1.800-1.700H24.700c1 0 1.800.7 1.800 1.700" fill="none" stroke="#dff0fc" stroke-width="1.200"/>
</svg>
<!-- Ps -->
<div class="abs" style="left:447px;top:733px;width:28px;height:26px;background:linear-gradient(#2a63b4,#12408a);box-shadow:0 2px 3px rgba(0,0,0,.5)"></div>
<div class="t" style="left:447px;top:736px;width:28px;text-align:center;color:#e6eefc;font-size:15px;line-height:20px;font-weight:700;letter-spacing:-.3px">Ps</div>
<!-- Ai -->
<div class="abs" style="left:509px;top:733px;width:28px;height:26px;background:#2a1a05;border:2px solid #f5a820;box-shadow:0 2px 3px rgba(0,0,0,.5)"></div>
<div class="t" style="left:509px;top:736px;width:28px;text-align:center;color:#f8ae25;font-size:15px;line-height:20px;font-weight:700">Ai</div>
<!-- Br -->
<div class="abs" style="left:571px;top:733px;width:28px;height:26px;background:#231803;border:2px solid #f2b418;box-shadow:0 2px 3px rgba(0,0,0,.5)"></div>
<div class="t" style="left:571px;top:736px;width:28px;text-align:center;color:#f5bb20;font-size:15px;line-height:20px;font-weight:700">Br</div>
<!-- PDF -->
<svg style="left:632px;top:733px" width="30" height="28" viewBox="0 0 30 28">
 <rect x=".5" y=".5" width="28" height="27" rx="2" fill="#e6eef9" stroke="#7fa0d4"/>
 <rect x="1" y="1" width="27" height="9" fill="#f6f9fd"/>
 <g><rect x="4" y="1" width="2" height="7" fill="#e8402c"/><rect x="6.500" y="1" width="2" height="6" fill="#f5a81c"/><rect x="9" y="1" width="2" height="7" fill="#7fc241"/><rect x="11.500" y="1" width="2" height="6" fill="#2f9ae8"/><rect x="14" y="1" width="2" height="7" fill="#a04cc8"/></g>
 <path d="M3 14c4-5 14-5 19 0-5 5-15 5-19 0z" fill="#fff" stroke="#2f64b4" stroke-width="1.400"/>
 <circle cx="12.500" cy="14" r="3.300" fill="#2f7fd8"/><circle cx="12.500" cy="14" r="1.400" fill="#0f2f6a"/>
 <rect x="11" y="18.500" width="17.500" height="8.500" rx="1" fill="#e8442c"/>
 <text x="12.500" y="25.700" font-size="7.500" font-weight="bold" font-family="Liberation Sans,sans-serif" fill="#fff">PDF</text>
</svg>
<!-- calc -->
<svg style="left:696px;top:732px" width="24" height="31" viewBox="0 0 24 31">
 <rect x=".7" y=".7" width="22.600" height="29.600" rx="1.500" fill="#c9def2" stroke="#7fa6cf" stroke-width="1"/>
 <rect x="2.500" y="3" width="19" height="9.500" fill="#eef5fc" stroke="#8fb0d4" stroke-width=".7"/>
 <rect x="2.500" y="3" width="19" height="2.300" fill="#f5c85a"/>
 <text x="14.500" y="11.500" font-size="7.500" font-style="italic" font-family="Liberation Sans,sans-serif" fill="#3a5a8a">0</text>
 <g fill="#f6f9fd" stroke="#9fb8d8" stroke-width=".4"><rect x="3" y="15" width="3.300" height="3"/><rect x="7.300" y="15" width="3.300" height="3"/><rect x="11.600" y="15" width="3.300" height="3"/><rect x="15.900" y="15" width="3.300" height="3"/><rect x="3" y="19" width="3.300" height="3"/><rect x="7.300" y="19" width="3.300" height="3"/><rect x="11.600" y="19" width="3.300" height="3"/><rect x="15.900" y="19" width="3.300" height="3"/><rect x="3" y="23" width="3.300" height="3"/><rect x="7.300" y="23" width="3.300" height="3"/><rect x="11.600" y="23" width="3.300" height="3"/><rect x="3" y="27" width="3.300" height="2.500"/><rect x="7.300" y="27" width="3.300" height="2.500"/><rect x="11.600" y="27" width="3.300" height="2.500"/></g>
 <rect x="16" y="23" width="3.300" height="6.500" fill="#f0a81c"/>
</svg>
<!-- powerpoint -->
<svg style="left:751px;top:731px" width="33" height="32" viewBox="0 0 33 32">
 <defs><linearGradient id="ppg" x1="0" y1="0" x2="1" y2="1"><stop offset="0" stop-color="#f9a56a"/><stop offset=".5" stop-color="#ee6a2c"/><stop offset="1" stop-color="#d8461a"/></linearGradient></defs>
 <rect x=".7" y=".7" width="28" height="28.600" fill="url(#ppg)" stroke="#c9400f" stroke-width="1.200"/>
 <rect x="1.900" y="1.900" width="25.600" height="26.200" fill="none" stroke="#fbc9a4" stroke-width="1"/>
 <path d="M12 18l17-5.500 3.500 12.500L15 30.500z" fill="#fdf3ec" stroke="#e8ded6" stroke-width=".5"/>
 <circle cx="22" cy="19" r="3.600" fill="#e85a2a"/><path d="M22 19v-3.600a3.600 3.600 0 0 1 3.400 2.500z" fill="#fbd9c4"/>
 <path d="M17 25.500l11-3M17.500 27.500l9-2.500" stroke="#f0a27c" stroke-width="1"/>
 <path d="M6 5h7.500c4.500 0 7 2.300 7 6s-2.700 6.200-7.200 6.200H10.500V24H6zM10.500 8.500v5.200h2.300c2 0 3.200-1 3.200-2.700s-1.200-2.500-3.200-2.500z" fill="#fff"/>
</svg>
<!-- snipping tool -->
<svg style="left:816px;top:731px" width="36" height="35" viewBox="0 0 36 35">
 <ellipse cx="12.500" cy="21" rx="10" ry="6.500" fill="#8e98a8" opacity=".55"/>
 <ellipse cx="14" cy="12" rx="11" ry="9.500" fill="#f2f0f2" stroke="#d8282c" stroke-width="1.500"/>
 <path d="M5 11c3-4 14-6 19-1-4-1-14 0-19 1z" fill="#fff" opacity=".8"/>
 <path d="M9 4.500L22 25" stroke="#555b66" stroke-width="2.200"/><path d="M14 3L20.500 25" stroke="#8a909c" stroke-width="2"/>
 <ellipse cx="19" cy="29.500" rx="2.300" ry="4" transform="rotate(-15 19 29.500)" fill="none" stroke="#2f9ae8" stroke-width="2"/>
 <ellipse cx="28" cy="25" rx="2.500" ry="4.800" transform="rotate(-60 28 25)" fill="none" stroke="#2f9ae8" stroke-width="2"/>
</svg>
<!-- paint -->
<svg style="left:878px;top:731px" width="36" height="36" viewBox="0 0 36 36">
 <defs><linearGradient id="plg" x1="0" y1="0" x2="1" y2="1"><stop offset="0" stop-color="#dff0fa"/><stop offset=".6" stop-color="#9cc4e2"/><stop offset="1" stop-color="#6fa0cc"/></linearGradient></defs>
 <path d="M16 7c8-1.500 13.500 3 13.500 9s-5 13-10.500 15c-4 1.400-4.500-2-3-4.500 1.300-2.200-.5-3.500-3-3C8 24.500 1.500 22 2.500 16.500 3.500 11 9 8.300 16 7z" fill="url(#plg)" stroke="#8ab0d0" stroke-width=".6"/>
 <circle cx="8.500" cy="17.500" r="2.400" fill="#e8402c"/><circle cx="13" cy="12.500" r="2.400" fill="#5fb832"/><circle cx="19.500" cy="10.500" r="2.400" fill="#f5b81c"/><circle cx="16.500" cy="21" r="2.200" fill="#2f6fd0"/>
 <path d="M29.500 6.500L19 33" stroke="#e8821c" stroke-width="2.200" stroke-linecap="round"/>
 <path d="M27.500 8.500l4 1.500 2-7.500-1.500-1.500c-2 1.500-3.500 4-4.500 7.500z" fill="#e8c89a" stroke="#b9905a" stroke-width=".5"/>
</svg>
<!-- tray -->
<svg style="left:1014px;top:737px" width="18" height="18" viewBox="0 0 18 18">
 <circle cx="8" cy="8.500" r="6.800" fill="#5fb0e0" stroke="#d9e9f5" stroke-width=".6"/>
 <path d="M3 5c2-2 4-2 5 0s3 1 4 3-2 4-4 3-2-3-4-2.500S2 7 3 5z" fill="#6fc23a"/>
 <path d="M6 15.500l8.500-8 2.500 2.500-8.500 8-3 .5z" fill="#f5c53a" stroke="#8a6a1c" stroke-width=".6"/><path d="M6 15.500l2.500 2.500-3 .5z" fill="#333"/>
</svg>
<div class="t" style="left:1036px;top:735px;font-size:17px;line-height:22px;color:#fff;font-weight:500;font-family:'Noto Sans CJK KR',sans-serif">가</div>
<div class="t" style="left:1054px;top:735px;font-size:17px;line-height:22px;color:#fff;font-weight:500;font-family:'Noto Sans CJK KR',sans-serif">漢</div>
<div class="abs" style="left:1078px;top:739px;width:15px;height:15px;border-radius:8px;background:radial-gradient(circle at 50% 30%,#5a6fe0,#1c2fb4 60%,#0f1c8a);border:1px solid #dfe6f5"></div>
<div class="t" style="left:1078px;top:738px;width:15px;text-align:center;color:#fff;font-weight:700;font-size:12px;line-height:16px">?</div>
<svg style="left:1103px;top:736px" width="8" height="8" viewBox="0 0 8 8"><rect x="2.500" y=".5" width="5" height="4" fill="none" stroke="#fff" stroke-width="1"/><rect x=".5" y="3" width="5" height="4" fill="#1c3a63" stroke="#fff" stroke-width="1"/></svg>
<svg style="left:1104px;top:749px" width="6" height="4" viewBox="0 0 6 4"><path d="M0 0h6L3 3.500z" fill="#fff"/></svg>
<!-- monitor/power/speaker -->
<svg style="left:1192px;top:742px" width="16" height="16" viewBox="0 0 16 16"><rect x="1" y="1" width="13" height="9.500" fill="#182c48" stroke="#fff" stroke-width="1.300"/><path d="M7.500 10.500v2.500M3.500 13.700h8" stroke="#fff" stroke-width="1.500"/></svg>
<svg style="left:1214px;top:739px" width="16" height="18" viewBox="0 0 16 18">
 <rect x="1" y="3" width="9" height="12" rx="1" fill="none" stroke="#fff" stroke-width="1.500"/><rect x="3.500" y=".8" width="4" height="2.500" fill="#fff"/>
 <path d="M8 6h3M8 10h3" stroke="#fff" stroke-width="1.300"/><rect x="10.500" y="4.500" width="3.500" height="7" rx="1" fill="#fff"/><path d="M12.500 11.500c0 3-1.500 4.500-5 4.500" fill="none" stroke="#fff" stroke-width="1.300"/>
 <rect x="3" y="6" width="4" height="6" fill="#fff"/>
</svg>
<svg style="left:1237px;top:740px" width="18" height="17" viewBox="0 0 18 17">
 <path d="M1 5.500h3.500L9 1v14L4.500 10.500H1z" fill="#fff"/>
 <circle cx="12.500" cy="11" r="4.300" fill="#e8282c" stroke="#fff" stroke-width=".8"/><path d="M9.800 13.700l5.400-5.400" stroke="#fff" stroke-width="1.400"/>
</svg>
<!-- tooltip -->
<div class="abs" style="left:1111px;top:740px;width:81px;height:21px;background:linear-gradient(#fff,#f1f2f6);border:1px solid #767676;border-radius:3px;box-shadow:1px 2px 3px rgba(0,0,0,.45)"></div>
<div class="t k" style="left:1115px;top:743px;color:#3c3c3c;font-weight:400">여러 슬라이드</div>
<!-- clock -->
<div class="t" style="left:1262px;top:733px;width:88px;text-align:center;color:#fff;font-size:12px"><span class="k">오후</span> <span style="font-size:13px">12:13</span></div>
<div class="t" style="left:1262px;top:750px;width:88px;text-align:center;color:#fff;font-size:13.200px">2013-08-01</div>
<div class="abs" style="left:1352px;top:729px;width:14px;height:39px;background:linear-gradient(to right,rgba(150,175,210,.45),rgba(90,120,165,.35) 40%,rgba(50,78,120,.3));border:1px solid rgba(8,16,34,.9);box-shadow:inset 0 0 0 1px rgba(170,195,225,.55)"></div>
</body>
</html>
